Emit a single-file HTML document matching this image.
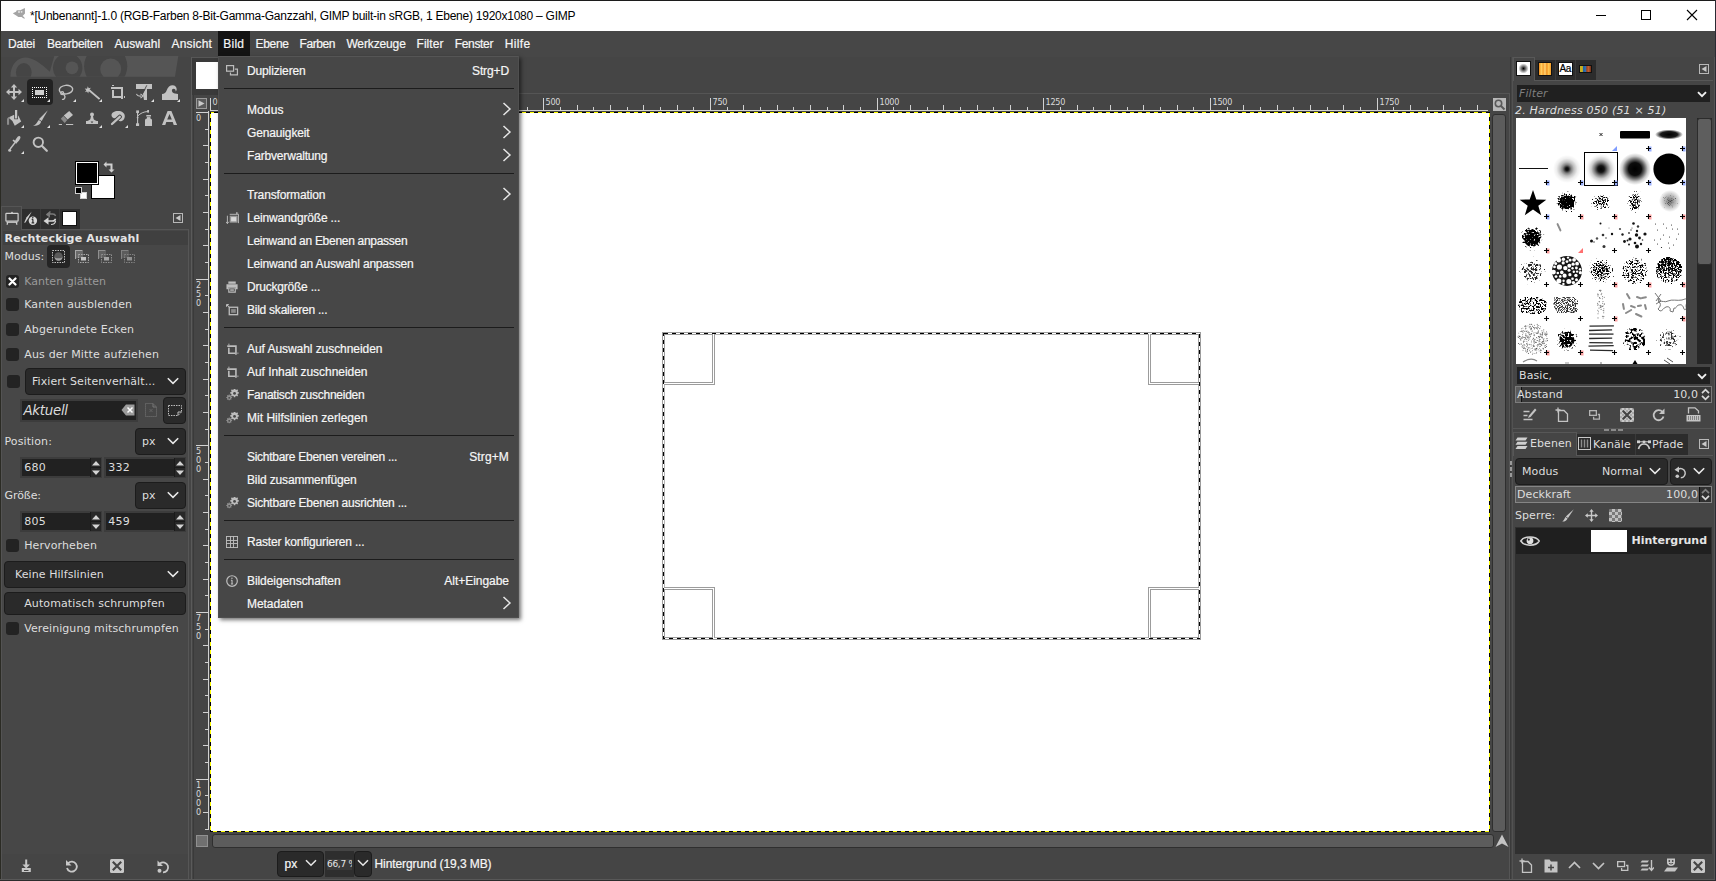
<!DOCTYPE html><html lang="de"><head><meta charset="utf-8"><title>GIMP</title><style>
html,body{margin:0;padding:0;}
body{width:1716px;height:881px;overflow:hidden;position:relative;background:#454545;font-family:"DejaVu Sans","Liberation Sans",sans-serif;font-size:11px;color:#dedede;}
div,span,svg{position:absolute;box-sizing:border-box;}
span{white-space:nowrap;}
.dv{font-family:"DejaVu Sans","Liberation Sans",sans-serif;font-size:11px;line-height:13px;color:#dedede;letter-spacing:0.08px;}
.dvb{font-family:"DejaVu Sans","Liberation Sans",sans-serif;font-size:11px;line-height:13px;color:#e4e4e4;font-weight:bold;letter-spacing:0.2px;}
.dvi{font-family:"DejaVu Sans","Liberation Sans",sans-serif;font-size:11px;line-height:13px;color:#dedede;font-style:italic;letter-spacing:0.1px;}
.ls{font-family:"Liberation Sans","DejaVu Sans",sans-serif;font-size:12px;line-height:14px;color:#f6f6f6;-webkit-text-stroke:0.2px #f6f6f6;}
.tt{font-family:"Liberation Sans","DejaVu Sans",sans-serif;font-size:12px;line-height:14px;color:#000;}
.r6{font-family:"DejaVu Sans","Liberation Sans",sans-serif;font-size:9px;line-height:10px;color:#d8d8d8;}
.cb{background:#232323;border-radius:3px;}
.btn{background:#2a2a2a;border:1px solid #1c1c1c;border-radius:4px;}
.entry{background:#252525;border:1px solid #3a3a3a;}
</style></head><body>
<div style="left:0px;top:0px;width:1716px;height:31px;background:#ffffff;"></div>
<div style="left:0px;top:0px;width:1716px;height:1px;background:#1c1c1c;"></div>
<div style="left:0px;top:0px;width:1px;height:31px;background:#1c1c1c;"></div>
<svg style="left:12px;top:7px;width:14px;height:13px" viewBox="12 7 14 13"><path d="M12.800 13.300L16 11.800L16.800 10.200L20.200 10.300L24.900 8.100L25 13.600L22.600 15.900L24 17L25 18.700L23.300 18.200L21.600 16.900L18.400 16.900L15.800 15.200L14.600 14.600z" fill="#a4a4a4"/><circle cx="19" cy="12" r="0.900" fill="#e8e8e8"/><circle cx="21.600" cy="11.800" r="0.900" fill="#e8e8e8"/></svg>
<span class="tt" style="left:30px;top:9px;letter-spacing:-0.244px;">*[Unbenannt]-1.0 (RGB-Farben 8-Bit-Gamma-Ganzzahl, GIMP built-in sRGB, 1 Ebene) 1920x1080 – GIMP</span>
<svg style="left:1580px;top:0;width:136px;height:31px" viewBox="0 0 136 31"><g stroke="#000" stroke-width="1" fill="none" shape-rendering="crispEdges"><path d="M16 15.5h10"/><rect x="61.5" y="10.5" width="9" height="9"/></g><path d="M107 10l10 10M117 10l-10 10" stroke="#000" stroke-width="1.1" fill="none"/></svg>
<div style="left:0px;top:31px;width:1716px;height:26px;background:#474747;"></div>
<div style="left:218px;top:31px;width:32px;height:25px;background:#141414;"></div>
<span class="ls" style="left:7.9px;top:37px;letter-spacing:-0.163px;">Datei</span>
<span class="ls" style="left:47.1px;top:37px;letter-spacing:-0.245px;">Bearbeiten</span>
<span class="ls" style="left:114.5px;top:37px;letter-spacing:0.034px;">Auswahl</span>
<span class="ls" style="left:171.5px;top:37px;letter-spacing:0.178px;">Ansicht</span>
<span class="ls" style="left:223.3px;top:37px;letter-spacing:0.247px;">Bild</span>
<span class="ls" style="left:255.5px;top:37px;letter-spacing:-0.320px;">Ebene</span>
<span class="ls" style="left:299.5px;top:37px;letter-spacing:-0.404px;">Farben</span>
<span class="ls" style="left:346.4px;top:37px;letter-spacing:-0.131px;">Werkzeuge</span>
<span class="ls" style="left:416.5px;top:37px;letter-spacing:0.055px;">Filter</span>
<span class="ls" style="left:454.7px;top:37px;letter-spacing:-0.326px;">Fenster</span>
<span class="ls" style="left:504.7px;top:37px;letter-spacing:0.359px;">Hilfe</span>
<div style="left:0px;top:31px;width:1px;height:850px;background:#2b2b24;"></div>
<svg style="left:0px;top:54px;width:190px;height:28px;" viewBox="0 0 190 28"><defs><clipPath id="wb"><path d="M10.400 22.700C10.400 10 18 3.400 25.500 3.400C33 3.400 42 10 49.800 17.700L54.300 2H178.300L175 22.700z"/></clipPath></defs><g clip-path="url(#wb)"><rect x="0" y="0" width="190" height="28" fill="#555555"/><ellipse cx="23.800" cy="18.300" rx="7.800" ry="9.400" fill="#454545"/><circle cx="67.700" cy="13.800" r="14.700" fill="#454545"/><circle cx="72" cy="13.800" r="6.400" fill="#555555"/><circle cx="105.700" cy="12.200" r="21.600" fill="#454545"/><circle cx="110.700" cy="15" r="10.500" fill="#555555"/></g></svg>
<div style="left:27px;top:79px;width:26px;height:26px;background:#222222;border-radius:4px;"></div>
<svg style="left:6px;top:84px;width:16px;height:16px;" viewBox="0 0 16 16"><path d="M8 0l3.200 3.500H9V7h3.500V4.800L16 8l-3.500 3.200V9H9v3.500h2.200L8 16l-3.200-3.500H7V9H3.500v2.200L0 8l3.500-3.200V7H7V3.500H4.800z" fill="#c2c2c2"/></svg>
<svg style="left:21px;top:99px;width:3px;height:3px;" viewBox="0 0 3 3"><path d="M3 0V3H0z" fill="#e0e0e0"/></svg>
<svg style="left:32px;top:84px;width:16px;height:16px;" viewBox="0 0 16 16"><g fill="#ffffff" shape-rendering="crispEdges"><rect x="0" y="3" width="1" height="1"/><rect x="0" y="13" width="1" height="1"/><rect x="2" y="3" width="1" height="1"/><rect x="2" y="13" width="1" height="1"/><rect x="4" y="3" width="1" height="1"/><rect x="4" y="13" width="1" height="1"/><rect x="6" y="3" width="1" height="1"/><rect x="6" y="13" width="1" height="1"/><rect x="8" y="3" width="1" height="1"/><rect x="8" y="13" width="1" height="1"/><rect x="10" y="3" width="1" height="1"/><rect x="10" y="13" width="1" height="1"/><rect x="12" y="3" width="1" height="1"/><rect x="12" y="13" width="1" height="1"/><rect x="14" y="3" width="1" height="1"/><rect x="14" y="13" width="1" height="1"/><rect x="0" y="5" width="1" height="1"/><rect x="14" y="5" width="1" height="1"/><rect x="0" y="7" width="1" height="1"/><rect x="14" y="7" width="1" height="1"/><rect x="0" y="9" width="1" height="1"/><rect x="14" y="9" width="1" height="1"/><rect x="0" y="11" width="1" height="1"/><rect x="14" y="11" width="1" height="1"/></g><rect x="3" y="6" width="9" height="5" fill="#cfcfcf"/></svg>
<svg style="left:47px;top:99px;width:3px;height:3px;" viewBox="0 0 3 3"><path d="M3 0V3H0z" fill="#e0e0e0"/></svg>
<svg style="left:58px;top:84px;width:16px;height:16px;" viewBox="0 0 16 16"><ellipse cx="8" cy="5.600" rx="6.700" ry="4.300" fill="none" stroke="#c2c2c2" stroke-width="1.400" transform="rotate(-6 8 5.600)"/><circle cx="4.200" cy="9.200" r="1.500" fill="none" stroke="#c2c2c2" stroke-width="1.200"/><path d="M5.200 10.200c1.800 1 2.400 3.400.8 4.800c-.7.600-1.500.600-2 .4" fill="none" stroke="#c2c2c2" stroke-width="1.400"/></svg>
<svg style="left:73px;top:99px;width:3px;height:3px;" viewBox="0 0 3 3"><path d="M3 0V3H0z" fill="#e0e0e0"/></svg>
<svg style="left:84px;top:84px;width:16px;height:16px;" viewBox="0 0 16 16"><path d="M5.500 6.500L15.500 15" stroke="#c2c2c2" stroke-width="1.700" fill="none"/><path d="M3.800 2.200l.9 2.100l2.200-.5l-1.300 1.800l1.500 1.700l-2.300 0l-.6 2.200l-1.100-2l-2.200.7l1.400-1.800l-1.500-1.800l2.300.1z" fill="#c2c2c2"/></svg>
<svg style="left:99px;top:99px;width:3px;height:3px;" viewBox="0 0 3 3"><path d="M3 0V3H0z" fill="#e0e0e0"/></svg>
<svg style="left:110px;top:84px;width:16px;height:16px;" viewBox="0 0 16 16"><path d="M1 3h12v12h-2V5H1z" fill="#c2c2c2"/><path d="M2 6h2v6h7v2H2z" fill="#c2c2c2"/><rect x="2" y="1" width="2" height="1" fill="#c2c2c2"/><rect x="14" y="12" width="1" height="2" fill="#c2c2c2"/></svg>
<svg style="left:136px;top:84px;width:16px;height:16px;" viewBox="0 0 16 16"><path d="M0 0H16V5H11V16H7.400L6.600 10.300L9.800 4.500L10.200 5H0z" fill="#c2c2c2"/><path d="M10.800 1.300L6.500 9.800L7.500 16" stroke="#454545" stroke-width="0.900" fill="none"/><path d="M0.500 9.800c.3 1.800 1.600 2.300 4.500 2.300" stroke="#c2c2c2" stroke-width="1.100" fill="none"/><path d="M4.500 9.800l2.600 2.200l-2.600 2.200" stroke="#c2c2c2" stroke-width="1.100" fill="none"/></svg>
<svg style="left:151px;top:99px;width:3px;height:3px;" viewBox="0 0 3 3"><path d="M3 0V3H0z" fill="#e0e0e0"/></svg>
<svg style="left:162px;top:84px;width:16px;height:16px;" viewBox="0 0 16 16"><path d="M0 16V10C2.500 10 3.800 9 4.600 6.600C5.800 3 8 1.300 10.500 1.300c2.700 0 4.200 1.900 4.200 3.900c0 1-.4 1.700-1 2.200c0-1.400-.5-2.600-2-2.600c-1.500 0-2 1.300-1.700 2.500c.4 1.400 1.600 2.100 3 2.300L16 10v6z" fill="#c2c2c2"/></svg>
<svg style="left:177px;top:99px;width:3px;height:3px;" viewBox="0 0 3 3"><path d="M3 0V3H0z" fill="#e0e0e0"/></svg>
<svg style="left:6px;top:110px;width:16px;height:16px;" viewBox="0 0 16 16"><path d="M9 0h2.200v8.500H9z" fill="#c2c2c2"/><path d="M2.300 7.500L8.200 4.800V9.200h3.800V5.500l.4.200L15.200 11.600L8.800 15.800L6.400 11z" fill="#c2c2c2"/><path d="M3.400 6.900C1.200 7.600 1 8.500 1 10v4.700h2.100V10c0-1 .3-1.500 1.100-2z" fill="#8c8c8c"/></svg>
<svg style="left:21px;top:125px;width:3px;height:3px;" viewBox="0 0 3 3"><path d="M3 0V3H0z" fill="#e0e0e0"/></svg>
<svg style="left:32px;top:110px;width:16px;height:16px;" viewBox="0 0 16 16"><path d="M15.800 0.200L9.700 11L6.900 9.200z" fill="#c2c2c2"/><path d="M6.700 9.900l2.200 1.400c.3 2.500-2.500 4.700-7.900 4.500c2.800-.9 3.700-3 5.700-5.900z" fill="#c2c2c2"/></svg>
<svg style="left:47px;top:125px;width:3px;height:3px;" viewBox="0 0 3 3"><path d="M3 0V3H0z" fill="#e0e0e0"/></svg>
<svg style="left:58px;top:110px;width:16px;height:16px;" viewBox="0 0 16 16"><path d="M11.200 1l3.800 4.100l-5.400 4.400L5.800 5.500z" fill="#c2c2c2"/><path d="M5.400 6.100l3.800 4l-2.500 2.800L2.800 8.800z" fill="#8a8a8a"/><path d="M0.800 14.500h3.200M8 14.500h7.200" stroke="#c2c2c2" stroke-width="1.100"/></svg>
<svg style="left:84px;top:110px;width:16px;height:16px;" viewBox="0 0 16 16"><circle cx="8" cy="4.500" r="2" fill="#c2c2c2"/><path d="M7 6h2l.5 2.500c.3 1.300 1.500 2.200 3.200 2.400H14v3.200H2v-3.200h1.300c1.700-.2 2.900-1.100 3.200-2.400z" fill="#c2c2c2"/><path d="M6.600 11.400h2.800L8 13.200z" fill="#454545"/></svg>
<svg style="left:99px;top:125px;width:3px;height:3px;" viewBox="0 0 3 3"><path d="M3 0V3H0z" fill="#e0e0e0"/></svg>
<svg style="left:110px;top:110px;width:16px;height:16px;" viewBox="0 0 16 16"><path d="M8 1c4 0 6.800 2 6.800 5.200c0 3-2.200 5-4.600 5c-1.500 0-2.300-.7-2-1.700c.3-1-.3-1.500-1.300-1.300c-3 .600-5.400-.7-5.400-3c0-2.500 2.800-4.200 6.500-4.200z" fill="#c2c2c2"/><path d="M9.800 6.800L2 14" stroke="#454545" stroke-width="4.200" stroke-linecap="round"/><path d="M9.800 6.800L2 14" stroke="#c2c2c2" stroke-width="2.300" stroke-linecap="round"/></svg>
<svg style="left:125px;top:125px;width:3px;height:3px;" viewBox="0 0 3 3"><path d="M3 0V3H0z" fill="#e0e0e0"/></svg>
<svg style="left:136px;top:110px;width:16px;height:16px;" viewBox="0 0 16 16"><path d="M1.600 1.500v13" fill="none" stroke="#c2c2c2" stroke-width="1.100"/><path d="M1.900 5.900C4.500 3.200 7.500 1.800 12 1.500" fill="none" stroke="#c2c2c2" stroke-width="1"/><rect x="0.200" y="0.400" width="2.800" height="2.600" fill="#c2c2c2"/><rect x="0" y="13.300" width="3.100" height="2.800" fill="#c2c2c2"/><circle cx="1.600" cy="7.600" r="0.900" fill="#c2c2c2"/><rect x="11.200" y="0" width="1.800" height="2.600" fill="#c2c2c2"/><path d="M10.300 5.100h4.700v1.600h-4.700zM10.900 6.700h3.500v1.900c1 .2 1.700.8 1.700 1.800v5.700H9V10.400c0-1 .8-1.600 1.900-1.800z" fill="#c2c2c2"/><path d="M10.300 6.700h4.700" stroke="#454545" stroke-width="0.500"/></svg>
<svg style="left:162px;top:110px;width:16px;height:16px;" viewBox="0 0 16 16"><path d="M5.600 1h3.800l5.700 14h-3.400l-1-2.900H4.300L3.300 15H0zM7.500 4.100L5.200 9.600h4.600z" fill="#c2c2c2"/></svg>
<svg style="left:6px;top:136px;width:16px;height:16px;" viewBox="0 0 16 16"><ellipse cx="11.700" cy="3.400" rx="3.800" ry="1.700" transform="rotate(-54 11.700 3.400)" fill="#c2c2c2"/><path d="M7 4.200l3.800 2.800" stroke="#c2c2c2" stroke-width="1.600"/><path d="M9.300 6.300L4.100 13" stroke="#c2c2c2" stroke-width="1.400"/><circle cx="3.700" cy="14.300" r="1.500" fill="#c2c2c2"/></svg>
<svg style="left:21px;top:151px;width:3px;height:3px;" viewBox="0 0 3 3"><path d="M3 0V3H0z" fill="#e0e0e0"/></svg>
<svg style="left:32px;top:136px;width:16px;height:16px;" viewBox="0 0 16 16"><circle cx="6.300" cy="6.300" r="4.700" fill="none" stroke="#c2c2c2" stroke-width="1.900"/><path d="M9.800 9.800l5 5" stroke="#c2c2c2" stroke-width="2.200" stroke-linecap="round"/></svg>
<div style="left:91px;top:175px;width:24px;height:24px;background:#ffffff;border:1px solid #000;"></div>
<div style="left:75px;top:161px;width:24px;height:24px;background:#000000;border:1px solid #000;box-shadow:inset 0 0 0 1px #fff;"></div>
<div style="left:80px;top:192px;width:7px;height:7px;background:#ffffff;border:1px solid #d0d0d0;"></div>
<div style="left:75px;top:187px;width:7px;height:7px;background:#000000;border:1px solid #d0d0d0;"></div>
<svg style="left:103px;top:161px;width:12px;height:12px;" viewBox="0 0 12 12"><path d="M0.500 3.500L3.500 0.500V2.500H9.500V8.500H11.500L8.500 11.500L5.500 8.500H7.500V4.500H3.500V6.500z" fill="#d0d0d0"/></svg>
<div style="left:22px;top:209px;width:58px;height:20px;background:#2e2e2e;"></div>
<div style="left:40px;top:209px;width:1px;height:20px;background:#3a3a3a;"></div>
<div style="left:59px;top:209px;width:1px;height:20px;background:#3a3a3a;"></div>
<div style="left:1px;top:206px;width:21px;height:24px;background:#454545;border:1px solid #555;border-bottom:none;"></div>
<div style="left:22px;top:229px;width:167px;height:1px;background:#555555;"></div>
<svg style="left:5px;top:211px;width:14px;height:14px;" viewBox="0 0 14 14"><rect x="0.900" y="2.400" width="12.200" height="7.800" rx="0.500" fill="#404040" stroke="#cfcfcf" stroke-width="1.200"/><path d="M5.800 2L7 0.600L8.200 2z" fill="#cfcfcf"/><path d="M1.500 11.300h11" stroke="#cfcfcf" stroke-width="1.100"/><path d="M2.800 11.300l-.8 2.500M11.200 11.300l.8 2.500" stroke="#cfcfcf" stroke-width="1.200"/></svg>
<svg style="left:24px;top:211px;width:15px;height:15px;" viewBox="0 0 15 15"><path d="M7.800 0.500L4.200 7.200L1 12L0.300 11.600L2.600 6.200z" fill="#d0d0d0"/><circle cx="8.900" cy="9.700" r="4.200" fill="#d8d8d8"/><path d="M8.900 8.300v3.600M7.700 8.400h1.200M7.600 11.900h2.600" stroke="#2e2e2e" stroke-width="1.200" fill="none"/><circle cx="8.800" cy="6.700" r="0.800" fill="#2e2e2e"/></svg>
<svg style="left:43px;top:211px;width:14px;height:15px;" viewBox="0 0 14 15"><path d="M3.500 3.800L6.800 1v2h3c1.500 0 2.500.8 2.800 2" fill="none" stroke="#7a7a7a" stroke-width="1.300"/><path d="M3 3.800L7 0.800V6.800z" fill="#7a7a7a"/><path d="M0.500 10L5.500 6.300V13.700z" fill="#d4d4d4"/><path d="M5 10h4.300c2 0 3-1 3-2.300" fill="none" stroke="#d4d4d4" stroke-width="1.700"/><path d="M8 13.500c2.500 0 4.300-1.200 4.500-3.500" fill="none" stroke="#d4d4d4" stroke-width="1.200"/></svg>
<div style="left:62px;top:211px;width:15px;height:15px;background:#ffffff;border:1px solid #111;"></div>
<svg style="left:173px;top:213px;width:10px;height:10px;" viewBox="0 0 10 10"><rect x="0.500" y="0.500" width="9" height="9" fill="none" stroke="#b8b8b8"/><path d="M7.500 2v6L2.500 5z" fill="#c8c8c8"/></svg>
<div style="left:2px;top:230px;width:186px;height:624px;background:#474747;"></div>
<div style="left:3px;top:231px;width:185px;height:14px;background:#404040;"></div>
<span class="dvb" style="left:4.5px;top:232px;letter-spacing:0.166px;">Rechteckige Auswahl</span>
<span class="dv" style="left:4.5px;top:250px;letter-spacing:-0.002px;">Modus:</span>
<div style="left:47px;top:245px;width:23px;height:23px;background:#242424;border-radius:4px;"></div>
<svg style="left:52px;top:250px;width:13px;height:13px;" viewBox="0 0 13 13"><rect x="0.500" y="0.500" width="12" height="12" fill="none" stroke="#bdbdbd" stroke-dasharray="1.500 1"/><circle cx="6.500" cy="6.500" r="4.200" fill="#5a5a5a"/><path d="M2.300 6.500a4.200 4.200 0 0 0 8.400 0a4.200 1.800 0 0 1-8.400 0z" fill="#a0a0a0"/></svg>
<svg style="left:75px;top:250px;width:14px;height:13px;" viewBox="0 0 14 13"><g opacity="1"><path d="M0.500 9V0.500H7.500" fill="none" stroke="#a8a8a8" stroke-width="1.200"/><rect x="1" y="1" width="7" height="7" fill="#6a6a6a"/><rect x="3.500" y="4.500" width="10" height="8" fill="none" stroke="#a8a8a8" stroke-dasharray="1.500 1"/><rect x="6" y="7" width="5" height="3.500" fill="#c4c4c4"/></g></svg>
<svg style="left:98px;top:250px;width:14px;height:13px;" viewBox="0 0 14 13"><g opacity="0.75"><path d="M0.500 9V0.500H7.500" fill="none" stroke="#a8a8a8" stroke-width="1.200"/><rect x="1" y="1" width="7" height="7" fill="#6a6a6a"/><rect x="3.500" y="4.500" width="10" height="8" fill="none" stroke="#a8a8a8" stroke-dasharray="1.500 1"/><rect x="6" y="7" width="5" height="3.500" fill="#c4c4c4"/></g></svg>
<svg style="left:121px;top:250px;width:14px;height:13px;" viewBox="0 0 14 13"><g opacity="0.6"><path d="M0.500 9V0.500H7.500" fill="none" stroke="#a8a8a8" stroke-width="1.200"/><rect x="1" y="1" width="7" height="7" fill="#6a6a6a"/><rect x="3.500" y="4.500" width="10" height="8" fill="none" stroke="#a8a8a8" stroke-dasharray="1.500 1"/><rect x="6" y="7" width="5" height="3.500" fill="#c4c4c4"/></g></svg>
<div class="cb" style="left:6px;top:275px;width:13px;height:13px;"></div>
<svg style="left:8px;top:277px;width:9px;height:9px;" viewBox="0 0 9 9"><path d="M1.500 1.500l6 6M7.500 1.500l-6 6" stroke="#ffffff" stroke-width="2.200" stroke-linecap="round"/></svg>
<span class="dv" style="left:24.2px;top:275px;letter-spacing:0.034px;color:#9a9a9a;">Kanten glätten</span>
<div class="cb" style="left:6px;top:298px;width:13px;height:13px;"></div>
<span class="dv" style="left:24.2px;top:298px;letter-spacing:0.098px;">Kanten ausblenden</span>
<div class="cb" style="left:6px;top:323px;width:13px;height:13px;"></div>
<span class="dv" style="left:24.2px;top:323px;letter-spacing:0.131px;">Abgerundete Ecken</span>
<div class="cb" style="left:6px;top:348px;width:13px;height:13px;"></div>
<span class="dv" style="left:24.2px;top:348px;letter-spacing:0.181px;">Aus der Mitte aufziehen</span>
<div class="cb" style="left:7px;top:375px;width:13px;height:13px;"></div>
<div class="btn" style="left:25px;top:368px;width:161px;height:27px;"></div>
<span class="dv" style="left:32px;top:375px;letter-spacing:0.088px;">Fixiert Seitenverhält...</span>
<svg style="left:167px;top:377px;width:12px;height:8px;" viewBox="0 0 12 8"><path d="M0.800 1.200l5.200 5.200l5.200-5.200" fill="none" stroke="#e8e8e8" stroke-width="1.600"/></svg>
<div style="left:20px;top:399px;width:118px;height:23px;background:#212121;border:2px solid #3c3c3c;"></div>
<span class="dvi" style="left:23.5px;top:402.5px;font-size:13.4px;line-height:16px;color:#dcdcdc;letter-spacing:-0.3px;">Aktuell</span>
<svg style="left:121px;top:404px;width:14px;height:12px;" viewBox="0 0 14 12"><path d="M0.500 6L5 0.500H13.500V11.500H5z" fill="#9c9c9c"/><path d="M6.500 3.500l5 5M11.500 3.500l-5 5" stroke="#ffffff" stroke-width="1.500"/></svg>
<svg style="left:145px;top:403px;width:12px;height:14px;" viewBox="0 0 12 14"><path d="M0.500 0.500H8L11.500 4V13.500H0.500z" fill="none" stroke="#787878" stroke-width="1" stroke-dasharray="1 1"/><path d="M8 0.500V4H11.500" fill="none" stroke="#787878"/><path d="M4.500 6l3 3m0-3l-3 3" stroke="#6a6a6a" stroke-width="0.800"/></svg>
<div class="btn" style="left:163px;top:397px;width:23px;height:27px;"></div>
<svg style="left:168px;top:405px;width:14px;height:11px;" viewBox="0 0 14 11"><path d="M0.500 0.500H13.500V7L10 10.500H0.500z" fill="none" stroke="#bdbdbd" stroke-dasharray="1.500 1"/><path d="M13.500 7H10V10.500" fill="none" stroke="#bdbdbd"/></svg>
<span class="dv" style="left:4.5px;top:435px;letter-spacing:0.107px;">Position:</span>
<div class="btn" style="left:135px;top:428px;width:51px;height:27px;"></div>
<span class="dv" style="left:142px;top:435px;">px</span>
<svg style="left:167px;top:437px;width:12px;height:8px;" viewBox="0 0 12 8"><path d="M0.800 1.200l5.200 5.200l5.200-5.200" fill="none" stroke="#e8e8e8" stroke-width="1.600"/></svg>
<div style="left:20px;top:457px;width:82px;height:21px;background:#3c3c3c;"></div>
<div style="left:22px;top:459px;width:68px;height:17px;background:#212121;"></div>
<div style="left:90px;top:458px;width:11px;height:19px;background:#1a1a1a;"></div>
<div style="left:91px;top:458px;width:10px;height:9px;background:#282828;"></div>
<div style="left:91px;top:468px;width:10px;height:9px;background:#282828;"></div>
<span class="dv" style="left:24.3px;top:461px;letter-spacing:0.25px;">680</span>
<svg style="left:91px;top:458px;width:10px;height:19px;" viewBox="0 0 10 19"><path d="M1 7.500l4-4.500l4 4.500z" fill="#d4d4d4"/><path d="M1 12.500l4 4.500l4-4.500z" fill="#d4d4d4"/></svg>
<div style="left:104px;top:457px;width:82px;height:21px;background:#3c3c3c;"></div>
<div style="left:106px;top:459px;width:68px;height:17px;background:#212121;"></div>
<div style="left:174px;top:458px;width:11px;height:19px;background:#1a1a1a;"></div>
<div style="left:175px;top:458px;width:10px;height:9px;background:#282828;"></div>
<div style="left:175px;top:468px;width:10px;height:9px;background:#282828;"></div>
<span class="dv" style="left:108.3px;top:461px;letter-spacing:0.25px;">332</span>
<svg style="left:175px;top:458px;width:10px;height:19px;" viewBox="0 0 10 19"><path d="M1 7.500l4-4.500l4 4.500z" fill="#d4d4d4"/><path d="M1 12.500l4 4.500l4-4.500z" fill="#d4d4d4"/></svg>
<span class="dv" style="left:4.5px;top:489px;letter-spacing:-0.073px;">Größe:</span>
<div class="btn" style="left:135px;top:482px;width:51px;height:27px;"></div>
<span class="dv" style="left:142px;top:489px;">px</span>
<svg style="left:167px;top:491px;width:12px;height:8px;" viewBox="0 0 12 8"><path d="M0.800 1.200l5.200 5.200l5.200-5.200" fill="none" stroke="#e8e8e8" stroke-width="1.600"/></svg>
<div style="left:20px;top:511px;width:82px;height:21px;background:#3c3c3c;"></div>
<div style="left:22px;top:513px;width:68px;height:17px;background:#212121;"></div>
<div style="left:90px;top:512px;width:11px;height:19px;background:#1a1a1a;"></div>
<div style="left:91px;top:512px;width:10px;height:9px;background:#282828;"></div>
<div style="left:91px;top:522px;width:10px;height:9px;background:#282828;"></div>
<span class="dv" style="left:24.3px;top:515px;letter-spacing:0.25px;">805</span>
<svg style="left:91px;top:512px;width:10px;height:19px;" viewBox="0 0 10 19"><path d="M1 7.500l4-4.500l4 4.500z" fill="#d4d4d4"/><path d="M1 12.500l4 4.500l4-4.500z" fill="#d4d4d4"/></svg>
<div style="left:104px;top:511px;width:82px;height:21px;background:#3c3c3c;"></div>
<div style="left:106px;top:513px;width:68px;height:17px;background:#212121;"></div>
<div style="left:174px;top:512px;width:11px;height:19px;background:#1a1a1a;"></div>
<div style="left:175px;top:512px;width:10px;height:9px;background:#282828;"></div>
<div style="left:175px;top:522px;width:10px;height:9px;background:#282828;"></div>
<span class="dv" style="left:108.3px;top:515px;letter-spacing:0.25px;">459</span>
<svg style="left:175px;top:512px;width:10px;height:19px;" viewBox="0 0 10 19"><path d="M1 7.500l4-4.500l4 4.500z" fill="#d4d4d4"/><path d="M1 12.500l4 4.500l4-4.500z" fill="#d4d4d4"/></svg>
<div class="cb" style="left:6px;top:539px;width:13px;height:13px;"></div>
<span class="dv" style="left:24.2px;top:539px;letter-spacing:0.119px;">Hervorheben</span>
<div class="btn" style="left:4px;top:561px;width:182px;height:27px;"></div>
<span class="dv" style="left:15px;top:568px;letter-spacing:0.071px;">Keine Hilfslinien</span>
<svg style="left:167px;top:570px;width:12px;height:8px;" viewBox="0 0 12 8"><path d="M0.800 1.200l5.200 5.200l5.200-5.200" fill="none" stroke="#e8e8e8" stroke-width="1.600"/></svg>
<div class="btn" style="left:4px;top:592px;width:182px;height:23px;"></div>
<span class="dv" style="left:24.2px;top:597px;letter-spacing:0.115px;">Automatisch schrumpfen</span>
<div class="cb" style="left:6px;top:622px;width:13px;height:13px;"></div>
<span class="dv" style="left:24.2px;top:622px;letter-spacing:0.079px;">Vereinigung mitschrumpfen</span>
<svg style="left:21px;top:859px;width:12px;height:14px;" viewBox="0 0 12 14"><path d="M4.200 0.500h2v5h2.800L5.200 9.500L1.400 5.500H4.200z" fill="#c8c8c8"/><path d="M0.800 9h9v4H0.800z" fill="#c8c8c8"/><path d="M3 11.500h4.500" stroke="#454545" stroke-width="1"/></svg>
<svg style="left:65px;top:859px;width:14px;height:15px;" viewBox="0 0 14 15"><path d="M3.200 4.200A5 5 0 1 1 2 9" fill="none" stroke="#c8c8c8" stroke-width="1.800"/><path d="M1 1v5.500H6.500z" fill="#c8c8c8"/></svg>
<div style="left:110px;top:859px;width:14px;height:14px;background:#c8c8c8;border-radius:1.500px;"></div>
<svg style="left:110px;top:859px;width:14px;height:14px;" viewBox="0 0 14 14"><path d="M2.800 2.800l8.400 8.400M11.200 2.800l-8.400 8.400" stroke="#454545" stroke-width="2.200"/></svg>
<svg style="left:156px;top:859px;width:14px;height:15px;" viewBox="0 0 14 15"><path d="M4 4.500A5 5 0 1 1 7 13.400" fill="none" stroke="#c8c8c8" stroke-width="1.800"/><path d="M1.500 1.500v5.500H7z" fill="#c8c8c8"/><circle cx="3.500" cy="11.800" r="2" fill="#c8c8c8"/></svg>
<div style="left:1px;top:206px;width:1px;height:673px;background:#535353;"></div>
<div style="left:188px;top:230px;width:1px;height:649px;background:#565656;"></div>
<div style="left:191px;top:57px;width:1px;height:822px;background:#5a5a5a;"></div>
<div style="left:192px;top:57px;width:1318px;height:37px;background:#454545;"></div>
<div style="left:192px;top:57px;width:31px;height:38px;background:#3a3a3a;border-top:1px solid #565656;"></div>
<div style="left:196px;top:62px;width:26px;height:27px;background:#ffffff;"></div>
<div style="left:223px;top:93px;width:1287px;height:1px;background:#555555;"></div>
<div style="left:1509px;top:93px;width:1px;height:786px;background:#555555;"></div>
<div style="left:193px;top:94px;width:1px;height:785px;background:#3a3a3a;"></div>
<svg style="left:196px;top:98px;width:11px;height:11px;" viewBox="0 0 11 11"><rect x="0.5" y="0.5" width="10" height="10" fill="#5a5a5a" stroke="#9a9a9a"/><path d="M2.5 2.2l6 3.300l-6 3.300z" fill="#c8c8c8"/></svg>
<svg style="left:0;top:0;width:1716px;height:881px" viewBox="0 0 1716 881"><style>.rt{font-family:"DejaVu Sans Condensed","DejaVu Sans","Liberation Sans",sans-serif;font-size:9px;fill:#dadada;letter-spacing:-0.25px;}</style><g shape-rendering="crispEdges" stroke="#d2d2d2" stroke-width="1"><path d="M209.5 110.5H1488"/><path d="M210.5 98V110"/><path d="M227.5 107V110"/><path d="M243.5 105V110"/><path d="M260.5 107V110"/><path d="M277.5 105V110"/><path d="M293.5 107V110"/><path d="M310.5 105V110"/><path d="M327.5 107V110"/><path d="M343.5 105V110"/><path d="M360.5 107V110"/><path d="M377.5 98V110"/><path d="M393.5 107V110"/><path d="M410.5 105V110"/><path d="M427.5 107V110"/><path d="M443.5 105V110"/><path d="M460.5 107V110"/><path d="M477.5 105V110"/><path d="M493.5 107V110"/><path d="M510.5 105V110"/><path d="M527.5 107V110"/><path d="M543.5 98V110"/><path d="M560.5 107V110"/><path d="M577.5 105V110"/><path d="M593.5 107V110"/><path d="M610.5 105V110"/><path d="M627.5 107V110"/><path d="M643.5 105V110"/><path d="M660.5 107V110"/><path d="M677.5 105V110"/><path d="M693.5 107V110"/><path d="M710.5 98V110"/><path d="M727.5 107V110"/><path d="M743.5 105V110"/><path d="M760.5 107V110"/><path d="M777.5 105V110"/><path d="M793.5 107V110"/><path d="M810.5 105V110"/><path d="M827.5 107V110"/><path d="M843.5 105V110"/><path d="M860.5 107V110"/><path d="M877.5 98V110"/><path d="M893.5 107V110"/><path d="M910.5 105V110"/><path d="M927.5 107V110"/><path d="M943.5 105V110"/><path d="M960.5 107V110"/><path d="M977.5 105V110"/><path d="M993.5 107V110"/><path d="M1010.5 105V110"/><path d="M1027.5 107V110"/><path d="M1043.5 98V110"/><path d="M1060.5 107V110"/><path d="M1077.5 105V110"/><path d="M1093.5 107V110"/><path d="M1110.5 105V110"/><path d="M1127.5 107V110"/><path d="M1143.5 105V110"/><path d="M1160.5 107V110"/><path d="M1177.5 105V110"/><path d="M1193.5 107V110"/><path d="M1210.5 98V110"/><path d="M1227.5 107V110"/><path d="M1243.5 105V110"/><path d="M1260.5 107V110"/><path d="M1277.5 105V110"/><path d="M1293.5 107V110"/><path d="M1310.5 105V110"/><path d="M1327.5 107V110"/><path d="M1343.5 105V110"/><path d="M1360.5 107V110"/><path d="M1377.5 98V110"/><path d="M1393.5 107V110"/><path d="M1410.5 105V110"/><path d="M1427.5 107V110"/><path d="M1443.5 105V110"/><path d="M1460.5 107V110"/><path d="M1477.5 105V110"/></g><text x="212.5" y="105" class="rt">0</text><text x="379.5" y="105" class="rt">250</text><text x="545.5" y="105" class="rt">500</text><text x="712.5" y="105" class="rt">750</text><text x="879.5" y="105" class="rt">1000</text><text x="1045.5" y="105" class="rt">1250</text><text x="1212.5" y="105" class="rt">1500</text><text x="1379.5" y="105" class="rt">1750</text><g shape-rendering="crispEdges" stroke="#d2d2d2" stroke-width="1"><path d="M208.5 111V830"/><path d="M196 112.5H208"/><path d="M205 129.5H208"/><path d="M203 145.5H208"/><path d="M205 162.5H208"/><path d="M203 179.5H208"/><path d="M205 195.5H208"/><path d="M203 212.5H208"/><path d="M205 229.5H208"/><path d="M203 245.5H208"/><path d="M205 262.5H208"/><path d="M196 279.5H208"/><path d="M205 295.5H208"/><path d="M203 312.5H208"/><path d="M205 329.5H208"/><path d="M203 345.5H208"/><path d="M205 362.5H208"/><path d="M203 379.5H208"/><path d="M205 395.5H208"/><path d="M203 412.5H208"/><path d="M205 429.5H208"/><path d="M196 445.5H208"/><path d="M205 462.5H208"/><path d="M203 479.5H208"/><path d="M205 495.5H208"/><path d="M203 512.5H208"/><path d="M205 529.5H208"/><path d="M203 545.5H208"/><path d="M205 562.5H208"/><path d="M203 579.5H208"/><path d="M205 595.5H208"/><path d="M196 612.5H208"/><path d="M205 629.5H208"/><path d="M203 645.5H208"/><path d="M205 662.5H208"/><path d="M203 679.5H208"/><path d="M205 695.5H208"/><path d="M203 712.5H208"/><path d="M205 729.5H208"/><path d="M203 745.5H208"/><path d="M205 762.5H208"/><path d="M196 779.5H208"/><path d="M205 795.5H208"/><path d="M203 812.5H208"/><path d="M205 829.5H208"/></g><text x="196" y="120.5" class="rt">0</text><text x="196" y="287.5" class="rt">2</text><text x="196" y="296.7" class="rt">5</text><text x="196" y="305.9" class="rt">0</text><text x="196" y="453.5" class="rt">5</text><text x="196" y="462.7" class="rt">0</text><text x="196" y="471.9" class="rt">0</text><text x="196" y="620.5" class="rt">7</text><text x="196" y="629.7" class="rt">5</text><text x="196" y="638.9" class="rt">0</text><text x="196" y="787.5" class="rt">1</text><text x="196" y="796.7" class="rt">0</text><text x="196" y="805.9" class="rt">0</text><text x="196" y="815.1" class="rt">0</text></svg>
<div style="left:210px;top:112px;width:1280px;height:720px;background:#ffffff;"></div>
<svg style="left:0;top:0;width:1716px;height:881px" viewBox="0 0 1716 881"><g fill="none" stroke-width="1" shape-rendering="crispEdges"><rect x="210.5" y="112.5" width="1279" height="719" stroke="#000"/><rect x="210.5" y="112.5" width="1279" height="719" stroke="#ffff00" stroke-dasharray="4 4" stroke-dashoffset="1"/><rect x="662.5" y="332.5" width="538" height="307" stroke="#9c9c9c"/><rect x="664.5" y="334.5" width="534" height="303" stroke="#b4b4b4"/><rect x="662.5" y="332.5" width="52" height="52" stroke="#9c9c9c"/><rect x="664.5" y="334.5" width="48" height="48" stroke="#9c9c9c"/><rect x="663.5" y="333.5" width="50" height="50" stroke="#fff"/><rect x="1148.5" y="332.5" width="52" height="52" stroke="#9c9c9c"/><rect x="1150.5" y="334.5" width="48" height="48" stroke="#9c9c9c"/><rect x="1149.5" y="333.5" width="50" height="50" stroke="#fff"/><rect x="662.5" y="587.5" width="52" height="52" stroke="#9c9c9c"/><rect x="664.5" y="589.5" width="48" height="48" stroke="#9c9c9c"/><rect x="663.5" y="588.5" width="50" height="50" stroke="#fff"/><rect x="1148.5" y="587.5" width="52" height="52" stroke="#9c9c9c"/><rect x="1150.5" y="589.5" width="48" height="48" stroke="#9c9c9c"/><rect x="1149.5" y="588.5" width="50" height="50" stroke="#fff"/><rect x="663.5" y="333.5" width="536" height="305" stroke="#fff"/><rect x="663.5" y="333.5" width="536" height="305" stroke="#000" stroke-dasharray="4 4"/></g></svg>
<svg style="left:1493px;top:98px;width:13px;height:13px;" viewBox="0 0 13 13"><rect x="0" y="0" width="13" height="13" fill="#b8b8b8"/><circle cx="5.5" cy="5.5" r="3.2" fill="none" stroke="#5a5a5a" stroke-width="1.6"/><path d="M8 8l3.5 3.5" stroke="#5a5a5a" stroke-width="2"/></svg>
<div style="left:1492px;top:114px;width:14px;height:718px;background:#5c5c5c;border:1px solid #2f2f2f;border-radius:3px;"></div>
<div style="left:212px;top:834px;width:1282px;height:14px;background:#5c5c5c;border:1px solid #2f2f2f;border-radius:3px;"></div>
<svg style="left:196px;top:835px;width:12px;height:12px;" viewBox="0 0 12 12"><rect x="0" y="0" width="12" height="12" fill="#707070"/><rect x="0.5" y="0.5" width="11" height="11" fill="none" stroke="#b0b0b0" stroke-dasharray="1 1"/></svg>
<svg style="left:1495px;top:834px;width:14px;height:14px;" viewBox="0 0 14 14"><path d="M7 0.5L13.5 13L7 9.5L0.5 13z" fill="#c4c4c4"/></svg>
<div class="btn" style="left:277px;top:851px;width:47px;height:26px;"></div>
<span class="ls" style="left:284.5px;top:857px;">px</span>
<svg style="left:305px;top:859px;width:12px;height:8px;" viewBox="0 0 12 8"><path d="M1 1.2l5 5l5-5" fill="none" stroke="#e6e6e6" stroke-width="1.6"/></svg>
<div style="left:325px;top:851px;width:29px;height:26px;background:#2e2e2e;"></div>
<div style="left:327px;top:859px;width:25px;height:11px;background:#3a3a3a;"></div>
<span class="dv" style="left:327px;top:858px;font-size:9px;letter-spacing:-0.3px;width:25px;overflow:hidden;color:#e8e8e8;">66,7 %</span>
<div class="btn" style="left:354px;top:851px;width:18px;height:26px;"></div>
<svg style="left:357px;top:859px;width:12px;height:8px;" viewBox="0 0 12 8"><path d="M1 1.2l5 5l5-5" fill="none" stroke="#e6e6e6" stroke-width="1.6"/></svg>
<span class="ls" style="left:374.5px;top:857px;letter-spacing:-0.082px;">Hintergrund (19,3 MB)</span>
<div style="left:0px;top:879px;width:1716px;height:1px;background:#585858;"></div>
<div style="left:0px;top:880px;width:1716px;height:1px;background:#2c2c2c;"></div>
<div style="left:1510px;top:57px;width:1px;height:822px;background:#3a3a3a;"></div>
<div style="left:1512px;top:57px;width:1px;height:822px;background:#525252;"></div>
<div style="left:1714px;top:57px;width:1px;height:822px;background:#555555;"></div>
<div style="left:1715px;top:0px;width:1px;height:881px;background:#2a2a33;"></div>
<div style="left:1535px;top:60px;width:61px;height:20px;background:#2c2c2c;"></div>
<div style="left:1555px;top:60px;width:1px;height:20px;background:#3a3a3a;"></div>
<div style="left:1575px;top:60px;width:1px;height:20px;background:#3a3a3a;"></div>
<div style="left:1513px;top:57px;width:22px;height:24px;background:#454545;border:1px solid #575757;border-bottom:none;"></div>
<div style="left:1535px;top:80px;width:178px;height:1px;background:#575757;"></div>
<div style="left:1516px;top:61px;width:15px;height:15px;background:#ffffff;border:1px solid #111;background:radial-gradient(circle at 50% 50%,#000 0,#555 18%,#fff 55%);"></div>
<div style="left:1538px;top:62px;width:14px;height:14px;border:1px solid #111;background:linear-gradient(90deg,#f08a18 0,#ffd060 20%,#f7a030 35%,#ffd878 50%,#f09020 65%,#ffc850 80%,#f39a28 100%);"></div>
<div style="left:1558px;top:62px;width:15px;height:14px;background:#ffffff;border:1px solid #111;"></div>
<span class="ls" style="left:1559.5px;top:62px;font-size:10px;line-height:13px;color:#000;letter-spacing:-0.4px;-webkit-text-stroke:0.2px #000;">Aa</span>
<div style="left:1579px;top:65px;width:13px;height:8px;border:1px solid #111;background:linear-gradient(90deg,#c8b020 0,#c8b020 22%,#2060a0 30%,#3070b0 50%,#a04020 62%,#c06030 78%,#703018 100%);"></div>
<svg style="left:1699px;top:64px;width:10px;height:10px;" viewBox="0 0 10 10"><rect x="0.500" y="0.500" width="9" height="9" fill="none" stroke="#b8b8b8"/><path d="M7.500 2v6L2.500 5z" fill="#c8c8c8"/></svg>
<div style="left:1517px;top:85px;width:193px;height:17px;background:#202020;"></div>
<span class="dvi" style="left:1519px;top:87px;color:#7e7e7e;">Filter</span>
<svg style="left:1696.5px;top:91px;width:10px;height:7px;" viewBox="0 0 10 7"><path d="M1 1.200l4 4l4-4" fill="none" stroke="#f0f0f0" stroke-width="1.900"/></svg>
<span class="dvi" style="left:1515px;top:104px;letter-spacing:0.200px;">2. Hardness 050 (51 × 51)</span>
<div style="left:1516px;top:118px;width:170px;height:246px;background:#ffffff;"></div>
<svg style="left:0;top:0;width:1716px;height:881px" viewBox="0 0 1716 881"><defs>
<radialGradient id="g1"><stop offset="0" stop-color="#000" stop-opacity="1"/><stop offset="0.12" stop-color="#000" stop-opacity="0.9"/><stop offset="0.3" stop-color="#000" stop-opacity="0.5"/><stop offset="0.5" stop-color="#000" stop-opacity="0.25"/><stop offset="0.75" stop-color="#000" stop-opacity="0.07"/><stop offset="1" stop-color="#000" stop-opacity="0"/></radialGradient>
<radialGradient id="g2"><stop offset="0" stop-color="#000" stop-opacity="1"/><stop offset="0.22" stop-color="#000" stop-opacity="0.92"/><stop offset="0.45" stop-color="#000" stop-opacity="0.5"/><stop offset="0.65" stop-color="#000" stop-opacity="0.2"/><stop offset="0.85" stop-color="#000" stop-opacity="0.05"/><stop offset="1" stop-color="#000" stop-opacity="0"/></radialGradient>
<radialGradient id="g3"><stop offset="0" stop-color="#000" stop-opacity="1"/><stop offset="0.4" stop-color="#000" stop-opacity="0.95"/><stop offset="0.6" stop-color="#000" stop-opacity="0.6"/><stop offset="0.8" stop-color="#000" stop-opacity="0.2"/><stop offset="1" stop-color="#000" stop-opacity="0"/></radialGradient>
<radialGradient id="g4"><stop offset="0" stop-color="#000" stop-opacity="1"/><stop offset="0.6" stop-color="#000" stop-opacity="0.9"/><stop offset="1" stop-color="#000" stop-opacity="0"/></radialGradient>
<radialGradient id="gs"><stop offset="0" stop-color="#000" stop-opacity="1"/><stop offset="1" stop-color="#000" stop-opacity="0"/></radialGradient>
<radialGradient id="gc"><stop offset="0" stop-color="#000" stop-opacity="1"/><stop offset="0.45" stop-color="#000" stop-opacity="0.9"/><stop offset="1" stop-color="#000" stop-opacity="0"/></radialGradient>
<radialGradient id="gf"><stop offset="0" stop-color="#000" stop-opacity="1"/><stop offset="0.8" stop-color="#000" stop-opacity="0.9"/><stop offset="1" stop-color="#000" stop-opacity="0.2"/></radialGradient>
<linearGradient id="gv" x1="0" y1="0" x2="0" y2="1"><stop offset="0" stop-color="#000" stop-opacity="1"/><stop offset="0.45" stop-color="#000" stop-opacity="0.9"/><stop offset="1" stop-color="#000" stop-opacity="0.6"/></linearGradient>
<clipPath id="gridclip"><rect x="1516" y="118" width="170" height="246"/></clipPath><filter id="sp1" x="-10%" y="-10%" width="120%" height="120%" color-interpolation-filters="sRGB"><feTurbulence type="fractalNoise" baseFrequency="0.55" numOctaves="2" seed="3" result="t"/><feColorMatrix in="t" type="matrix" values="0 0 0 0 0  0 0 0 0 0  0 0 0 0 0  1 0 0 0 0" result="n"/><feComposite in="SourceGraphic" in2="n" operator="arithmetic" k1="0" k2="4.5" k3="6" k4="-5.22" result="c"/><feComponentTransfer in="c"><feFuncA type="linear" slope="1" intercept="0"/></feComponentTransfer></filter><filter id="sp2" x="-10%" y="-10%" width="120%" height="120%" color-interpolation-filters="sRGB"><feTurbulence type="fractalNoise" baseFrequency="0.8" numOctaves="2" seed="11" result="t"/><feColorMatrix in="t" type="matrix" values="0 0 0 0 0  0 0 0 0 0  0 0 0 0 0  1 0 0 0 0" result="n"/><feComposite in="SourceGraphic" in2="n" operator="arithmetic" k1="0" k2="3.5" k3="7" k4="-6.3" result="c"/><feComponentTransfer in="c"><feFuncA type="linear" slope="1" intercept="0"/></feComponentTransfer></filter><filter id="sp3" x="-10%" y="-10%" width="120%" height="120%" color-interpolation-filters="sRGB"><feTurbulence type="fractalNoise" baseFrequency="0.8" numOctaves="2" seed="5" result="t"/><feColorMatrix in="t" type="matrix" values="0 0 0 0 0  0 0 0 0 0  0 0 0 0 0  1 0 0 0 0" result="n"/><feComposite in="SourceGraphic" in2="n" operator="arithmetic" k1="0" k2="3.5" k3="7" k4="-6.3" result="c"/><feComponentTransfer in="c"><feFuncA type="linear" slope="1" intercept="0"/></feComponentTransfer></filter><filter id="sp4" x="-10%" y="-10%" width="120%" height="120%" color-interpolation-filters="sRGB"><feTurbulence type="fractalNoise" baseFrequency="0.9" numOctaves="2" seed="9" result="t"/><feColorMatrix in="t" type="matrix" values="0 0 0 0 0  0 0 0 0 0  0 0 0 0 0  1 0 0 0 0" result="n"/><feComposite in="SourceGraphic" in2="n" operator="arithmetic" k1="0" k2="2.25" k3="5" k4="-4.35" result="c"/><feComponentTransfer in="c"><feFuncA type="linear" slope="1" intercept="0"/></feComponentTransfer></filter><filter id="sp5" x="-10%" y="-10%" width="120%" height="120%" color-interpolation-filters="sRGB"><feTurbulence type="fractalNoise" baseFrequency="0.5" numOctaves="2" seed="21" result="t"/><feColorMatrix in="t" type="matrix" values="0 0 0 0 0  0 0 0 0 0  0 0 0 0 0  1 0 0 0 0" result="n"/><feComposite in="SourceGraphic" in2="n" operator="arithmetic" k1="0" k2="4.2" k3="6" k4="-5.4" result="c"/><feComponentTransfer in="c"><feFuncA type="linear" slope="1" intercept="0"/></feComponentTransfer></filter><filter id="sp6" x="-10%" y="-10%" width="120%" height="120%" color-interpolation-filters="sRGB"><feTurbulence type="fractalNoise" baseFrequency="0.45" numOctaves="2" seed="31" result="t"/><feColorMatrix in="t" type="matrix" values="0 0 0 0 0  0 0 0 0 0  0 0 0 0 0  1 0 0 0 0" result="n"/><feComposite in="SourceGraphic" in2="n" operator="arithmetic" k1="0" k2="4.05" k3="9" k4="-8.01" result="c"/><feComponentTransfer in="c"><feFuncA type="linear" slope="1" intercept="0"/></feComponentTransfer></filter><filter id="sp7" x="-10%" y="-10%" width="120%" height="120%" color-interpolation-filters="sRGB"><feTurbulence type="fractalNoise" baseFrequency="0.8" numOctaves="2" seed="13" result="t"/><feColorMatrix in="t" type="matrix" values="0 0 0 0 0  0 0 0 0 0  0 0 0 0 0  1 0 0 0 0" result="n"/><feComposite in="SourceGraphic" in2="n" operator="arithmetic" k1="0" k2="3.5" k3="7" k4="-6.16" result="c"/><feComponentTransfer in="c"><feFuncA type="linear" slope="1" intercept="0"/></feComponentTransfer></filter><filter id="sp8" x="-10%" y="-10%" width="120%" height="120%" color-interpolation-filters="sRGB"><feTurbulence type="fractalNoise" baseFrequency="0.6" numOctaves="2" seed="17" result="t"/><feColorMatrix in="t" type="matrix" values="0 0 0 0 0  0 0 0 0 0  0 0 0 0 0  1 0 0 0 0" result="n"/><feComposite in="SourceGraphic" in2="n" operator="arithmetic" k1="0" k2="4.05" k3="9" k4="-8.28" result="c"/><feComponentTransfer in="c"><feFuncA type="linear" slope="1" intercept="0"/></feComponentTransfer></filter><filter id="sp9" x="-10%" y="-10%" width="120%" height="120%" color-interpolation-filters="sRGB"><feTurbulence type="fractalNoise" baseFrequency="0.6" numOctaves="2" seed="19" result="t"/><feColorMatrix in="t" type="matrix" values="0 0 0 0 0  0 0 0 0 0  0 0 0 0 0  1 0 0 0 0" result="n"/><feComposite in="SourceGraphic" in2="n" operator="arithmetic" k1="0" k2="4.4" k3="8" k4="-7.04" result="c"/><feComponentTransfer in="c"><feFuncA type="linear" slope="1" intercept="0"/></feComponentTransfer></filter><filter id="sp10" x="-10%" y="-10%" width="120%" height="120%" color-interpolation-filters="sRGB"><feTurbulence type="fractalNoise" baseFrequency="0.6" numOctaves="2" seed="23" result="t"/><feColorMatrix in="t" type="matrix" values="0 0 0 0 0  0 0 0 0 0  0 0 0 0 0  1 0 0 0 0" result="n"/><feComposite in="SourceGraphic" in2="n" operator="arithmetic" k1="0" k2="4.05" k3="9" k4="-8.28" result="c"/><feComponentTransfer in="c"><feFuncA type="linear" slope="1" intercept="0"/></feComponentTransfer></filter><filter id="sp11" x="-10%" y="-10%" width="120%" height="120%" color-interpolation-filters="sRGB"><feTurbulence type="fractalNoise" baseFrequency="0.8" numOctaves="2" seed="27" result="t"/><feColorMatrix in="t" type="matrix" values="0 0 0 0 0  0 0 0 0 0  0 0 0 0 0  1 0 0 0 0" result="n"/><feComposite in="SourceGraphic" in2="n" operator="arithmetic" k1="0" k2="3.15" k3="7" k4="-6.23" result="c"/><feComponentTransfer in="c"><feFuncA type="linear" slope="1" intercept="0"/></feComponentTransfer></filter><filter id="sp12" x="-10%" y="-10%" width="120%" height="120%" color-interpolation-filters="sRGB"><feTurbulence type="fractalNoise" baseFrequency="0.5" numOctaves="2" seed="37" result="t"/><feColorMatrix in="t" type="matrix" values="0 0 0 0 0  0 0 0 0 0  0 0 0 0 0  1 0 0 0 0" result="n"/><feComposite in="SourceGraphic" in2="n" operator="arithmetic" k1="0" k2="3.9" k3="6" k4="-5.4" result="c"/><feComponentTransfer in="c"><feFuncA type="linear" slope="1" intercept="0"/></feComponentTransfer></filter><filter id="sp13" x="-10%" y="-10%" width="120%" height="120%" color-interpolation-filters="sRGB"><feTurbulence type="fractalNoise" baseFrequency="0.35" numOctaves="2" seed="41" result="t"/><feColorMatrix in="t" type="matrix" values="0 0 0 0 0  0 0 0 0 0  0 0 0 0 0  1 0 0 0 0" result="n"/><feComposite in="SourceGraphic" in2="n" operator="arithmetic" k1="0" k2="3.5" k3="7" k4="-6.44" result="c"/><feComponentTransfer in="c"><feFuncA type="linear" slope="1" intercept="0"/></feComponentTransfer></filter><filter id="sp14" x="-10%" y="-10%" width="120%" height="120%" color-interpolation-filters="sRGB"><feTurbulence type="fractalNoise" baseFrequency="0.45" numOctaves="2" seed="43" result="t"/><feColorMatrix in="t" type="matrix" values="0 0 0 0 0  0 0 0 0 0  0 0 0 0 0  1 0 0 0 0" result="n"/><feComposite in="SourceGraphic" in2="n" operator="arithmetic" k1="0" k2="2.88" k3="6" k4="-5.52" result="c"/><feComponentTransfer in="c"><feFuncA type="linear" slope="1" intercept="0"/></feComponentTransfer></filter></defs><g clip-path="url(#gridclip)"><path d="M1599.5 133l3 3m0-3l-3 3" stroke="#222" stroke-width="1"/><rect x="1620" y="131" width="30" height="7.500" rx="1" fill="#000"/><ellipse cx="1669" cy="134.5" rx="14" ry="5" fill="url(#g4)"/><rect x="1519" y="168" width="29" height="1" fill="#111"/><circle cx="1567" cy="169" r="14" fill="url(#g1)"/><circle cx="1601" cy="169" r="15" fill="url(#g2)"/><rect x="1584.500" y="152.500" width="33" height="33" fill="none" stroke="#000" stroke-width="1" shape-rendering="crispEdges"/><circle cx="1635" cy="169" r="16" fill="url(#g3)"/><circle cx="1669" cy="169" r="15.600" fill="#000"/><polygon points="1533.0,190.0 1536.3,199.5 1546.3,199.7 1538.3,205.7 1541.2,215.3 1533.0,209.6 1524.8,215.3 1527.7,205.7 1519.7,199.7 1529.7,199.5" fill="#000"/><g filter="url(#sp1)" opacity="1"><ellipse cx="1567" cy="202" rx="13" ry="12" fill="url(#gc)"/></g><g filter="url(#sp2)" opacity="1"><ellipse cx="1601" cy="202" rx="14" ry="11" fill="url(#gc)"/></g><g filter="url(#sp3)" opacity="1"><ellipse cx="1635" cy="202" rx="10" ry="15" fill="url(#gc)"/></g><ellipse cx="1670" cy="201" rx="11" ry="11" fill="url(#gs)" opacity="0.55"/><g filter="url(#sp4)" opacity="0.5"><ellipse cx="1670" cy="201" rx="12" ry="12" fill="url(#gs)"/></g><g filter="url(#sp5)" opacity="1"><ellipse cx="1532" cy="238" rx="15" ry="15" fill="url(#gc)"/></g><path d="M1557.5 224l3 6.500" stroke="#8c8c8c" stroke-width="1.800" stroke-linecap="round"/><circle cx="1600.5" cy="223.5" r="1" fill="#111" opacity="1"/><circle cx="1612" cy="234" r="1.2" fill="#111" opacity="1"/><circle cx="1603" cy="235" r="1.3" fill="#111" opacity="0.85"/><circle cx="1597" cy="238.5" r="1.2" fill="#111" opacity="0.75"/><circle cx="1591.5" cy="241" r="1.5" fill="#111" opacity="1"/><circle cx="1606" cy="238" r="0.8" fill="#111" opacity="0.75"/><circle cx="1604" cy="246.5" r="1.5" fill="#111" opacity="0.85"/><circle cx="1609" cy="228" r="0.5" fill="#111" opacity="0.65"/><circle cx="1594" cy="242" r="0.8" fill="#111" opacity="0.75"/><circle cx="1633.5" cy="223.5" r="1.3" fill="#111" opacity="1"/><circle cx="1638" cy="226.5" r="1.2" fill="#111" opacity="0.85"/><circle cx="1620" cy="229" r="1.1" fill="#111" opacity="0.75"/><circle cx="1631" cy="230" r="0.7" fill="#111" opacity="0.85"/><circle cx="1637" cy="231" r="1.2" fill="#111" opacity="0.95"/><circle cx="1645" cy="234" r="1.6" fill="#111" opacity="1"/><circle cx="1622.5" cy="234.5" r="1.2" fill="#111" opacity="0.95"/><circle cx="1636.5" cy="235" r="1.7" fill="#111" opacity="1"/><circle cx="1629" cy="233" r="0.9" fill="#111" opacity="0.85"/><circle cx="1639.5" cy="238" r="1.4" fill="#111" opacity="1"/><circle cx="1630" cy="239" r="1.6" fill="#111" opacity="1"/><circle cx="1627.5" cy="240.5" r="1" fill="#111" opacity="1"/><circle cx="1624.5" cy="241.5" r="1.4" fill="#111" opacity="1"/><circle cx="1642.5" cy="240" r="0.8" fill="#111" opacity="0.85"/><circle cx="1635" cy="243" r="1.3" fill="#111" opacity="1"/><circle cx="1641" cy="244" r="1.2" fill="#111" opacity="0.95"/><circle cx="1629" cy="244.5" r="1" fill="#111" opacity="0.95"/><circle cx="1637" cy="246.5" r="2" fill="#111" opacity="1"/><circle cx="1632" cy="228" r="0.6" fill="#111" opacity="0.75"/><circle cx="1655.5" cy="224" r="0.5" fill="#111" opacity="1"/><circle cx="1663.5" cy="224" r="0.5" fill="#111" opacity="1"/><circle cx="1671.5" cy="225" r="0.5" fill="#111" opacity="1"/><circle cx="1666.5" cy="228" r="0.5" fill="#111" opacity="1"/><circle cx="1672.5" cy="229" r="0.5" fill="#111" opacity="1"/><circle cx="1677.5" cy="229" r="0.5" fill="#111" opacity="1"/><circle cx="1657.5" cy="230" r="0.5" fill="#111" opacity="1"/><circle cx="1678.5" cy="234" r="0.5" fill="#111" opacity="1"/><circle cx="1663.5" cy="235" r="0.5" fill="#111" opacity="1"/><circle cx="1669.5" cy="237" r="0.5" fill="#111" opacity="1"/><circle cx="1660.5" cy="239" r="0.5" fill="#111" opacity="1"/><circle cx="1676.5" cy="239" r="0.5" fill="#111" opacity="1"/><circle cx="1654.5" cy="240" r="0.5" fill="#111" opacity="1"/><circle cx="1668.5" cy="243" r="0.5" fill="#111" opacity="1"/><circle cx="1657.5" cy="244" r="0.5" fill="#111" opacity="1"/><circle cx="1673.5" cy="245" r="0.5" fill="#111" opacity="1"/><circle cx="1661.5" cy="247.5" r="0.6" fill="#111" opacity="1"/><circle cx="1669.5" cy="248" r="0.5" fill="#111" opacity="1"/><g filter="url(#sp6)" opacity="0.85"><ellipse cx="1532" cy="271" rx="17" ry="17" fill="url(#gc)"/></g><circle cx="1567" cy="271" r="15" fill="#151515"/><circle cx="1564.6" cy="275.7" r="2.1" fill="#fff"/><circle cx="1575.9" cy="275.4" r="1.7" fill="#fff"/><circle cx="1556.0" cy="276.6" r="1.4" fill="#fff"/><circle cx="1568.8" cy="281.6" r="2.5" fill="#fff"/><circle cx="1559.4" cy="267.0" r="2.6" fill="#fff"/><circle cx="1569.9" cy="274.7" r="1.6" fill="#fff"/><circle cx="1569.3" cy="265.7" r="2.0" fill="#fff"/><circle cx="1563.2" cy="262.9" r="1.6" fill="#fff"/><circle cx="1570.1" cy="260.1" r="1.5" fill="#fff"/><circle cx="1572.5" cy="278.8" r="1.3" fill="#fff"/><circle cx="1574.1" cy="259.8" r="1.9" fill="#fff"/><circle cx="1565.3" cy="268.1" r="2.2" fill="#fff"/><circle cx="1558.8" cy="260.2" r="2.4" fill="#fff"/><circle cx="1558.9" cy="280.9" r="2.5" fill="#fff"/><circle cx="1560.3" cy="276.4" r="1.3" fill="#fff"/><circle cx="1557.8" cy="273.0" r="1.3" fill="#fff"/><circle cx="1576.4" cy="268.0" r="1.4" fill="#fff"/><circle cx="1577.1" cy="263.7" r="1.9" fill="#fff"/><circle cx="1567.0" cy="261.6" r="1.4" fill="#fff"/><circle cx="1553.5" cy="272.1" r="2.4" fill="#fff"/><circle cx="1573.8" cy="271.8" r="1.2" fill="#fff"/><circle cx="1561.8" cy="272.4" r="1.8" fill="#fff"/><circle cx="1563.6" cy="280.7" r="1.2" fill="#fff"/><circle cx="1576.5" cy="279.7" r="1.5" fill="#fff"/><circle cx="1580.0" cy="269.2" r="1.2" fill="#fff"/><circle cx="1569.0" cy="270.3" r="1.5" fill="#fff"/><circle cx="1573.1" cy="264.2" r="1.6" fill="#fff"/><circle cx="1554.5" cy="266.9" r="1.4" fill="#fff"/><circle cx="1568.0" cy="257.6" r="1.2" fill="#fff"/><circle cx="1563.4" cy="259.2" r="1.7" fill="#fff"/><circle cx="1563.4" cy="284.0" r="1.2" fill="#fff"/><circle cx="1580.4" cy="272.7" r="1.6" fill="#fff"/><circle cx="1555.7" cy="263.6" r="1.5" fill="#fff"/><circle cx="1573.4" cy="282.6" r="1.7" fill="#fff"/><circle cx="1572.5" cy="268.2" r="1.2" fill="#fff"/><circle cx="1577.1" cy="271.6" r="1.2" fill="#fff"/><g filter="url(#sp7)" opacity="1"><ellipse cx="1601" cy="271" rx="17" ry="16" fill="url(#gc)"/></g><g filter="url(#sp8)" opacity="1"><ellipse cx="1635" cy="271" rx="15" ry="15" fill="url(#gf)"/></g><g filter="url(#sp9)" opacity="1"><circle cx="1669" cy="270.5" r="13.500" fill="url(#gv)"/></g><g filter="url(#sp10)" opacity="1"><rect x="1518" y="297" width="29" height="17" rx="8" fill="#000"/></g><g filter="url(#sp11)" opacity="0.8"><path d="M1554 297h22l3 6l-2 10h-20l-4-8z" fill="#000"/></g><circle cx="1602.2" cy="306.5" r="0.550" fill="#777"/><circle cx="1600.9" cy="290.4" r="0.550" fill="#777"/><circle cx="1598.0" cy="295.9" r="0.550" fill="#777"/><circle cx="1603.2" cy="310.5" r="0.550" fill="#777"/><circle cx="1601.2" cy="294.6" r="0.550" fill="#777"/><circle cx="1604.3" cy="297.2" r="0.550" fill="#777"/><circle cx="1603.0" cy="301.5" r="0.550" fill="#777"/><circle cx="1597.5" cy="303.3" r="0.550" fill="#777"/><circle cx="1601.2" cy="307.0" r="0.550" fill="#777"/><circle cx="1600.5" cy="291.1" r="0.550" fill="#777"/><circle cx="1603.9" cy="316.5" r="0.550" fill="#777"/><circle cx="1603.7" cy="312.7" r="0.550" fill="#777"/><circle cx="1602.6" cy="303.3" r="0.550" fill="#777"/><circle cx="1599.3" cy="301.8" r="0.550" fill="#777"/><circle cx="1598.0" cy="313.8" r="0.550" fill="#777"/><circle cx="1599.5" cy="297.6" r="0.550" fill="#777"/><circle cx="1601.1" cy="309.4" r="0.550" fill="#777"/><circle cx="1602.4" cy="316.2" r="0.550" fill="#777"/><circle cx="1602.5" cy="306.5" r="0.550" fill="#777"/><circle cx="1603.8" cy="308.8" r="0.550" fill="#777"/><circle cx="1604.3" cy="304.3" r="0.550" fill="#777"/><circle cx="1598.1" cy="304.3" r="0.550" fill="#777"/><circle cx="1603.8" cy="310.8" r="0.550" fill="#777"/><circle cx="1600.9" cy="306.2" r="0.550" fill="#777"/><circle cx="1598.0" cy="317.9" r="0.550" fill="#777"/><circle cx="1599.2" cy="301.6" r="0.550" fill="#777"/><circle cx="1599.4" cy="290.4" r="0.550" fill="#777"/><circle cx="1597.8" cy="305.3" r="0.550" fill="#777"/><circle cx="1600.4" cy="290.3" r="0.550" fill="#777"/><circle cx="1598.4" cy="311.7" r="0.550" fill="#777"/><circle cx="1597.8" cy="310.2" r="0.550" fill="#777"/><circle cx="1600.2" cy="305.8" r="0.550" fill="#777"/><circle cx="1602.4" cy="298.7" r="0.550" fill="#777"/><circle cx="1602.6" cy="296.6" r="0.550" fill="#777"/><circle cx="1600.9" cy="305.6" r="0.550" fill="#777"/><circle cx="1600.2" cy="305.2" r="0.550" fill="#777"/><circle cx="1603.0" cy="305.9" r="0.550" fill="#777"/><circle cx="1598.3" cy="294.2" r="0.550" fill="#777"/><circle cx="1600.4" cy="307.4" r="0.550" fill="#777"/><circle cx="1601.7" cy="293.3" r="0.550" fill="#777"/><circle cx="1603.1" cy="316.4" r="0.550" fill="#777"/><circle cx="1600.0" cy="298.4" r="0.550" fill="#777"/><circle cx="1599.0" cy="308.1" r="0.550" fill="#777"/><circle cx="1597.6" cy="294.1" r="0.550" fill="#777"/><circle cx="1604.3" cy="303.8" r="0.550" fill="#777"/><circle cx="1603.1" cy="318.0" r="0.550" fill="#777"/><path d="M1627 294l2.5 4.3" stroke="#8a8a8a" stroke-width="2" stroke-linecap="round"/><path d="M1637 297l3.8 1.4" stroke="#8a8a8a" stroke-width="2" stroke-linecap="round"/><path d="M1642 298l3.9 -0.7" stroke="#8a8a8a" stroke-width="2" stroke-linecap="round"/><path d="M1623 304l0.9 4.9" stroke="#8a8a8a" stroke-width="2" stroke-linecap="round"/><path d="M1631 306l3.8 1.4" stroke="#8a8a8a" stroke-width="2" stroke-linecap="round"/><path d="M1638 306l3.0 -0.5" stroke="#8a8a8a" stroke-width="2" stroke-linecap="round"/><path d="M1645 305l1.0 3.9" stroke="#8a8a8a" stroke-width="2" stroke-linecap="round"/><path d="M1626 313l5.2 -3.0" stroke="#8a8a8a" stroke-width="2" stroke-linecap="round"/><path d="M1636 314l5.4 2.5" stroke="#8a8a8a" stroke-width="2" stroke-linecap="round"/><path d="M1655 293l6 8l-5 3M1661 294l-5 7M1659 302c3-2 6 1 9-1c4-2 9 0 14-1c3-1 5-2 6 0c0 3-2 3-2 6c1 3-1 5-2 3c-1-3-2-5-5-4c-3 0-2 4-5 3l-1 4l-3-1c1-3-1-5-4-4c-3 1-3 4-6 4l-2-2c2-2 3-4 2-6c-2-1-2-3-1-5z" fill="none" stroke="#777" stroke-width="1"/><circle cx="1522.0" cy="346.8" r="0.450" fill="#3a3a3a"/><circle cx="1542.5" cy="343.3" r="0.450" fill="#3a3a3a"/><circle cx="1540.3" cy="326.8" r="0.450" fill="#3a3a3a"/><circle cx="1536.8" cy="327.8" r="0.450" fill="#3a3a3a"/><circle cx="1528.2" cy="331.6" r="0.450" fill="#3a3a3a"/><circle cx="1542.1" cy="332.1" r="0.450" fill="#3a3a3a"/><circle cx="1541.4" cy="345.3" r="0.450" fill="#3a3a3a"/><circle cx="1536.3" cy="342.5" r="0.450" fill="#3a3a3a"/><circle cx="1543.5" cy="340.8" r="0.450" fill="#3a3a3a"/><circle cx="1539.7" cy="343.4" r="0.450" fill="#3a3a3a"/><circle cx="1523.0" cy="350.2" r="0.450" fill="#3a3a3a"/><circle cx="1538.0" cy="338.1" r="0.450" fill="#3a3a3a"/><circle cx="1538.6" cy="330.6" r="0.450" fill="#3a3a3a"/><circle cx="1531.6" cy="328.7" r="0.450" fill="#3a3a3a"/><circle cx="1531.9" cy="348.4" r="0.450" fill="#3a3a3a"/><circle cx="1522.8" cy="330.9" r="0.450" fill="#3a3a3a"/><circle cx="1537.9" cy="332.9" r="0.450" fill="#3a3a3a"/><circle cx="1547.4" cy="334.1" r="0.450" fill="#3a3a3a"/><circle cx="1543.2" cy="339.1" r="0.450" fill="#3a3a3a"/><circle cx="1537.2" cy="348.1" r="0.450" fill="#3a3a3a"/><circle cx="1545.4" cy="347.3" r="0.450" fill="#3a3a3a"/><circle cx="1539.5" cy="337.8" r="0.450" fill="#3a3a3a"/><circle cx="1540.2" cy="346.3" r="0.450" fill="#3a3a3a"/><circle cx="1532.6" cy="331.0" r="0.450" fill="#3a3a3a"/><circle cx="1525.9" cy="327.9" r="0.450" fill="#3a3a3a"/><circle cx="1536.3" cy="348.5" r="0.450" fill="#3a3a3a"/><circle cx="1538.3" cy="336.8" r="0.450" fill="#3a3a3a"/><circle cx="1523.4" cy="342.8" r="0.450" fill="#3a3a3a"/><circle cx="1546.6" cy="346.4" r="0.450" fill="#3a3a3a"/><circle cx="1532.5" cy="350.7" r="0.450" fill="#3a3a3a"/><circle cx="1533.2" cy="338.9" r="0.450" fill="#3a3a3a"/><circle cx="1534.1" cy="327.7" r="0.450" fill="#3a3a3a"/><circle cx="1545.6" cy="335.4" r="0.450" fill="#3a3a3a"/><circle cx="1534.3" cy="341.1" r="0.450" fill="#3a3a3a"/><circle cx="1538.6" cy="331.9" r="0.450" fill="#3a3a3a"/><circle cx="1526.8" cy="336.4" r="0.450" fill="#3a3a3a"/><circle cx="1524.9" cy="331.6" r="0.450" fill="#3a3a3a"/><circle cx="1540.1" cy="336.2" r="0.450" fill="#3a3a3a"/><circle cx="1539.0" cy="336.3" r="0.450" fill="#3a3a3a"/><circle cx="1536.6" cy="332.9" r="0.450" fill="#3a3a3a"/><circle cx="1545.2" cy="334.3" r="0.450" fill="#3a3a3a"/><circle cx="1536.7" cy="352.2" r="0.450" fill="#3a3a3a"/><circle cx="1545.1" cy="333.7" r="0.450" fill="#3a3a3a"/><circle cx="1526.9" cy="341.3" r="0.450" fill="#3a3a3a"/><circle cx="1535.6" cy="349.7" r="0.450" fill="#3a3a3a"/><circle cx="1529.1" cy="344.2" r="0.450" fill="#3a3a3a"/><circle cx="1531.6" cy="333.5" r="0.450" fill="#3a3a3a"/><circle cx="1543.3" cy="349.0" r="0.450" fill="#3a3a3a"/><circle cx="1539.0" cy="341.9" r="0.450" fill="#3a3a3a"/><circle cx="1530.5" cy="352.4" r="0.450" fill="#3a3a3a"/><circle cx="1525.7" cy="348.5" r="0.450" fill="#3a3a3a"/><circle cx="1527.5" cy="344.7" r="0.450" fill="#3a3a3a"/><circle cx="1534.7" cy="335.7" r="0.450" fill="#3a3a3a"/><circle cx="1531.5" cy="341.0" r="0.450" fill="#3a3a3a"/><circle cx="1529.2" cy="332.5" r="0.450" fill="#3a3a3a"/><circle cx="1544.2" cy="332.9" r="0.450" fill="#3a3a3a"/><circle cx="1534.2" cy="329.0" r="0.450" fill="#3a3a3a"/><circle cx="1522.6" cy="334.7" r="0.450" fill="#3a3a3a"/><circle cx="1547.6" cy="340.2" r="0.450" fill="#3a3a3a"/><circle cx="1539.9" cy="346.4" r="0.450" fill="#3a3a3a"/><circle cx="1524.6" cy="331.1" r="0.450" fill="#3a3a3a"/><circle cx="1532.5" cy="348.0" r="0.450" fill="#3a3a3a"/><circle cx="1534.7" cy="328.6" r="0.450" fill="#3a3a3a"/><circle cx="1532.5" cy="326.2" r="0.450" fill="#3a3a3a"/><circle cx="1535.7" cy="327.7" r="0.450" fill="#3a3a3a"/><circle cx="1526.7" cy="326.1" r="0.450" fill="#3a3a3a"/><circle cx="1525.9" cy="333.4" r="0.450" fill="#3a3a3a"/><circle cx="1540.9" cy="335.0" r="0.450" fill="#3a3a3a"/><circle cx="1530.9" cy="334.0" r="0.450" fill="#3a3a3a"/><circle cx="1533.9" cy="335.2" r="0.450" fill="#3a3a3a"/><circle cx="1522.6" cy="336.6" r="0.450" fill="#3a3a3a"/><circle cx="1537.7" cy="326.4" r="0.450" fill="#3a3a3a"/><circle cx="1519.7" cy="344.3" r="0.450" fill="#3a3a3a"/><circle cx="1531.8" cy="331.1" r="0.450" fill="#3a3a3a"/><circle cx="1520.7" cy="336.6" r="0.450" fill="#3a3a3a"/><circle cx="1542.4" cy="333.4" r="0.450" fill="#3a3a3a"/><circle cx="1534.2" cy="353.6" r="0.450" fill="#3a3a3a"/><circle cx="1539.6" cy="337.6" r="0.450" fill="#3a3a3a"/><circle cx="1524.0" cy="348.4" r="0.450" fill="#3a3a3a"/><circle cx="1542.1" cy="335.9" r="0.450" fill="#3a3a3a"/><circle cx="1540.4" cy="344.0" r="0.450" fill="#3a3a3a"/><circle cx="1545.2" cy="345.6" r="0.450" fill="#3a3a3a"/><circle cx="1534.3" cy="346.0" r="0.450" fill="#3a3a3a"/><circle cx="1531.3" cy="329.6" r="0.450" fill="#3a3a3a"/><circle cx="1530.1" cy="334.8" r="0.450" fill="#3a3a3a"/><circle cx="1543.7" cy="339.6" r="0.450" fill="#3a3a3a"/><circle cx="1538.1" cy="331.7" r="0.450" fill="#3a3a3a"/><circle cx="1540.1" cy="333.7" r="0.450" fill="#3a3a3a"/><circle cx="1521.1" cy="343.8" r="0.450" fill="#3a3a3a"/><circle cx="1535.1" cy="350.6" r="0.450" fill="#3a3a3a"/><circle cx="1546.3" cy="338.8" r="0.450" fill="#3a3a3a"/><circle cx="1525.1" cy="326.1" r="0.450" fill="#3a3a3a"/><circle cx="1533.5" cy="327.5" r="0.450" fill="#3a3a3a"/><circle cx="1544.3" cy="343.1" r="0.450" fill="#3a3a3a"/><circle cx="1525.4" cy="326.4" r="0.450" fill="#3a3a3a"/><circle cx="1544.3" cy="346.9" r="0.450" fill="#3a3a3a"/><circle cx="1540.8" cy="350.2" r="0.450" fill="#3a3a3a"/><circle cx="1538.0" cy="332.3" r="0.450" fill="#3a3a3a"/><circle cx="1535.1" cy="339.2" r="0.450" fill="#3a3a3a"/><circle cx="1527.5" cy="337.8" r="0.450" fill="#3a3a3a"/><circle cx="1518.8" cy="333.1" r="0.450" fill="#3a3a3a"/><circle cx="1531.6" cy="324.3" r="0.450" fill="#3a3a3a"/><circle cx="1535.0" cy="332.8" r="0.450" fill="#3a3a3a"/><circle cx="1546.4" cy="346.5" r="0.450" fill="#3a3a3a"/><circle cx="1541.6" cy="337.0" r="0.450" fill="#3a3a3a"/><circle cx="1520.2" cy="331.6" r="0.450" fill="#3a3a3a"/><circle cx="1529.8" cy="347.6" r="0.450" fill="#3a3a3a"/><circle cx="1518.6" cy="337.6" r="0.450" fill="#3a3a3a"/><circle cx="1543.6" cy="343.7" r="0.450" fill="#3a3a3a"/><circle cx="1523.9" cy="337.4" r="0.450" fill="#3a3a3a"/><circle cx="1536.6" cy="348.3" r="0.450" fill="#3a3a3a"/><circle cx="1528.8" cy="336.4" r="0.450" fill="#3a3a3a"/><circle cx="1531.6" cy="328.7" r="0.450" fill="#3a3a3a"/><circle cx="1527.5" cy="345.3" r="0.450" fill="#3a3a3a"/><circle cx="1529.0" cy="333.8" r="0.450" fill="#3a3a3a"/><circle cx="1526.4" cy="331.5" r="0.450" fill="#3a3a3a"/><circle cx="1539.9" cy="341.5" r="0.450" fill="#3a3a3a"/><circle cx="1537.0" cy="340.5" r="0.450" fill="#3a3a3a"/><circle cx="1533.6" cy="344.9" r="0.450" fill="#3a3a3a"/><circle cx="1526.4" cy="335.6" r="0.450" fill="#3a3a3a"/><circle cx="1524.1" cy="348.6" r="0.450" fill="#3a3a3a"/><circle cx="1540.1" cy="339.5" r="0.450" fill="#3a3a3a"/><circle cx="1537.1" cy="345.2" r="0.450" fill="#3a3a3a"/><circle cx="1539.8" cy="344.4" r="0.450" fill="#3a3a3a"/><circle cx="1533.2" cy="338.0" r="0.450" fill="#3a3a3a"/><circle cx="1541.9" cy="345.1" r="0.450" fill="#3a3a3a"/><circle cx="1536.6" cy="348.8" r="0.450" fill="#3a3a3a"/><circle cx="1525.9" cy="339.1" r="0.450" fill="#3a3a3a"/><circle cx="1524.1" cy="347.9" r="0.450" fill="#3a3a3a"/><circle cx="1539.6" cy="339.2" r="0.450" fill="#3a3a3a"/><circle cx="1529.0" cy="337.6" r="0.450" fill="#3a3a3a"/><circle cx="1518.4" cy="343.5" r="0.450" fill="#3a3a3a"/><circle cx="1539.1" cy="344.0" r="0.450" fill="#3a3a3a"/><circle cx="1525.7" cy="335.3" r="0.450" fill="#3a3a3a"/><circle cx="1528.5" cy="338.1" r="0.450" fill="#3a3a3a"/><circle cx="1527.1" cy="330.9" r="0.450" fill="#3a3a3a"/><circle cx="1546.3" cy="334.2" r="0.450" fill="#3a3a3a"/><circle cx="1535.2" cy="342.6" r="0.450" fill="#3a3a3a"/><circle cx="1542.9" cy="348.3" r="0.450" fill="#3a3a3a"/><circle cx="1529.9" cy="344.7" r="0.450" fill="#3a3a3a"/><circle cx="1541.3" cy="342.2" r="0.450" fill="#3a3a3a"/><circle cx="1521.7" cy="328.8" r="0.450" fill="#3a3a3a"/><circle cx="1527.5" cy="351.6" r="0.450" fill="#3a3a3a"/><circle cx="1542.3" cy="337.5" r="0.450" fill="#3a3a3a"/><circle cx="1534.0" cy="341.1" r="0.450" fill="#3a3a3a"/><circle cx="1533.1" cy="345.7" r="0.450" fill="#3a3a3a"/><circle cx="1525.9" cy="334.6" r="0.450" fill="#3a3a3a"/><circle cx="1531.1" cy="327.8" r="0.450" fill="#3a3a3a"/><circle cx="1522.8" cy="332.0" r="0.450" fill="#3a3a3a"/><circle cx="1522.7" cy="345.7" r="0.450" fill="#3a3a3a"/><circle cx="1542.2" cy="343.0" r="0.450" fill="#3a3a3a"/><circle cx="1523.3" cy="341.7" r="0.450" fill="#3a3a3a"/><circle cx="1533.9" cy="327.2" r="0.450" fill="#3a3a3a"/><circle cx="1543.0" cy="342.6" r="0.450" fill="#3a3a3a"/><circle cx="1537.5" cy="325.0" r="0.450" fill="#3a3a3a"/><circle cx="1526.8" cy="352.4" r="0.450" fill="#3a3a3a"/><circle cx="1526.2" cy="351.1" r="0.450" fill="#3a3a3a"/><circle cx="1537.2" cy="333.4" r="0.450" fill="#3a3a3a"/><circle cx="1526.0" cy="331.0" r="0.450" fill="#3a3a3a"/><circle cx="1530.1" cy="324.3" r="0.450" fill="#3a3a3a"/><circle cx="1540.6" cy="352.3" r="0.450" fill="#3a3a3a"/><circle cx="1534.7" cy="339.3" r="0.450" fill="#3a3a3a"/><circle cx="1527.2" cy="337.3" r="0.450" fill="#3a3a3a"/><circle cx="1528.2" cy="348.6" r="0.450" fill="#3a3a3a"/><circle cx="1525.6" cy="337.4" r="0.450" fill="#3a3a3a"/><circle cx="1543.4" cy="348.8" r="0.450" fill="#3a3a3a"/><circle cx="1528.0" cy="325.9" r="0.450" fill="#3a3a3a"/><circle cx="1546.0" cy="332.9" r="0.450" fill="#3a3a3a"/><circle cx="1529.8" cy="339.0" r="0.450" fill="#3a3a3a"/><circle cx="1540.2" cy="334.2" r="0.450" fill="#3a3a3a"/><circle cx="1529.5" cy="334.7" r="0.450" fill="#3a3a3a"/><circle cx="1523.4" cy="346.9" r="0.450" fill="#3a3a3a"/><circle cx="1528.6" cy="340.3" r="0.450" fill="#3a3a3a"/><circle cx="1526.5" cy="346.4" r="0.450" fill="#3a3a3a"/><circle cx="1546.5" cy="334.2" r="0.450" fill="#3a3a3a"/><circle cx="1533.4" cy="338.5" r="0.450" fill="#3a3a3a"/><circle cx="1544.9" cy="334.5" r="0.450" fill="#3a3a3a"/><circle cx="1543.1" cy="341.4" r="0.450" fill="#3a3a3a"/><circle cx="1541.2" cy="334.2" r="0.450" fill="#3a3a3a"/><circle cx="1525.7" cy="335.9" r="0.450" fill="#3a3a3a"/><circle cx="1541.3" cy="337.6" r="0.450" fill="#3a3a3a"/><circle cx="1539.1" cy="350.9" r="0.450" fill="#3a3a3a"/><circle cx="1521.5" cy="331.0" r="0.450" fill="#3a3a3a"/><circle cx="1527.3" cy="332.6" r="0.450" fill="#3a3a3a"/><circle cx="1537.6" cy="329.0" r="0.450" fill="#3a3a3a"/><circle cx="1524.7" cy="337.5" r="0.450" fill="#3a3a3a"/><circle cx="1532.5" cy="339.6" r="0.450" fill="#3a3a3a"/><circle cx="1532.7" cy="326.1" r="0.450" fill="#3a3a3a"/><circle cx="1527.7" cy="343.1" r="0.450" fill="#3a3a3a"/><circle cx="1535.7" cy="342.6" r="0.450" fill="#3a3a3a"/><circle cx="1523.2" cy="332.9" r="0.450" fill="#3a3a3a"/><circle cx="1519.5" cy="336.7" r="0.450" fill="#3a3a3a"/><circle cx="1524.1" cy="344.5" r="0.450" fill="#3a3a3a"/><circle cx="1530.0" cy="348.9" r="0.450" fill="#3a3a3a"/><circle cx="1547.5" cy="340.7" r="0.450" fill="#3a3a3a"/><circle cx="1536.5" cy="328.2" r="0.450" fill="#3a3a3a"/><circle cx="1529.7" cy="324.3" r="0.450" fill="#3a3a3a"/><circle cx="1528.6" cy="353.3" r="0.450" fill="#3a3a3a"/><circle cx="1538.2" cy="349.6" r="0.450" fill="#3a3a3a"/><circle cx="1530.7" cy="336.1" r="0.450" fill="#3a3a3a"/><circle cx="1534.2" cy="334.5" r="0.450" fill="#3a3a3a"/><circle cx="1537.5" cy="344.7" r="0.450" fill="#3a3a3a"/><circle cx="1524.7" cy="326.4" r="0.450" fill="#3a3a3a"/><circle cx="1530.6" cy="336.8" r="0.450" fill="#3a3a3a"/><circle cx="1521.1" cy="344.3" r="0.450" fill="#3a3a3a"/><circle cx="1544.2" cy="343.2" r="0.450" fill="#3a3a3a"/><circle cx="1520.9" cy="340.3" r="0.450" fill="#3a3a3a"/><circle cx="1524.6" cy="347.1" r="0.450" fill="#3a3a3a"/><circle cx="1535.9" cy="342.0" r="0.450" fill="#3a3a3a"/><circle cx="1540.7" cy="344.3" r="0.450" fill="#3a3a3a"/><circle cx="1546.5" cy="331.6" r="0.450" fill="#3a3a3a"/><circle cx="1534.1" cy="346.6" r="0.450" fill="#3a3a3a"/><circle cx="1537.1" cy="324.3" r="0.450" fill="#3a3a3a"/><circle cx="1542.4" cy="334.5" r="0.450" fill="#3a3a3a"/><circle cx="1525.5" cy="351.1" r="0.450" fill="#3a3a3a"/><circle cx="1531.2" cy="345.9" r="0.450" fill="#3a3a3a"/><circle cx="1538.2" cy="344.3" r="0.450" fill="#3a3a3a"/><circle cx="1542.5" cy="341.8" r="0.450" fill="#3a3a3a"/><circle cx="1544.0" cy="338.8" r="0.450" fill="#3a3a3a"/><circle cx="1525.7" cy="350.0" r="0.450" fill="#3a3a3a"/><circle cx="1533.4" cy="345.9" r="0.450" fill="#3a3a3a"/><circle cx="1525.3" cy="325.7" r="0.450" fill="#3a3a3a"/><circle cx="1533.9" cy="341.1" r="0.450" fill="#3a3a3a"/><circle cx="1543.8" cy="329.8" r="0.450" fill="#3a3a3a"/><circle cx="1524.8" cy="341.2" r="0.450" fill="#3a3a3a"/><circle cx="1543.5" cy="341.2" r="0.450" fill="#3a3a3a"/><circle cx="1537.7" cy="346.4" r="0.450" fill="#3a3a3a"/><circle cx="1545.6" cy="347.5" r="0.450" fill="#3a3a3a"/><circle cx="1530.6" cy="326.2" r="0.450" fill="#3a3a3a"/><circle cx="1519.6" cy="336.5" r="0.450" fill="#3a3a3a"/><circle cx="1524.3" cy="339.8" r="0.450" fill="#3a3a3a"/><circle cx="1531.8" cy="324.2" r="0.450" fill="#3a3a3a"/><circle cx="1541.6" cy="344.4" r="0.450" fill="#3a3a3a"/><circle cx="1525.9" cy="328.2" r="0.450" fill="#3a3a3a"/><circle cx="1545.0" cy="340.9" r="0.450" fill="#3a3a3a"/><circle cx="1530.5" cy="329.8" r="0.450" fill="#3a3a3a"/><circle cx="1527.4" cy="351.0" r="0.450" fill="#3a3a3a"/><circle cx="1525.8" cy="338.6" r="0.450" fill="#3a3a3a"/><circle cx="1529.0" cy="337.2" r="0.450" fill="#3a3a3a"/><circle cx="1523.3" cy="348.4" r="0.450" fill="#3a3a3a"/><circle cx="1533.6" cy="346.2" r="0.450" fill="#3a3a3a"/><circle cx="1523.7" cy="337.1" r="0.450" fill="#3a3a3a"/><circle cx="1547.2" cy="338.5" r="0.450" fill="#3a3a3a"/><circle cx="1529.2" cy="327.2" r="0.450" fill="#3a3a3a"/><circle cx="1526.5" cy="343.8" r="0.450" fill="#3a3a3a"/><circle cx="1528.4" cy="332.7" r="0.450" fill="#3a3a3a"/><circle cx="1540.9" cy="350.6" r="0.450" fill="#3a3a3a"/><circle cx="1532.3" cy="354.2" r="0.450" fill="#3a3a3a"/><circle cx="1529.1" cy="334.9" r="0.450" fill="#3a3a3a"/><circle cx="1521.1" cy="331.6" r="0.450" fill="#3a3a3a"/><circle cx="1528.3" cy="353.4" r="0.450" fill="#3a3a3a"/><circle cx="1522.6" cy="338.1" r="0.450" fill="#3a3a3a"/><circle cx="1534.2" cy="343.2" r="0.450" fill="#3a3a3a"/><circle cx="1518.2" cy="337.5" r="0.450" fill="#3a3a3a"/><circle cx="1522.1" cy="337.7" r="0.450" fill="#3a3a3a"/><circle cx="1519.0" cy="335.7" r="0.450" fill="#3a3a3a"/><circle cx="1530.2" cy="328.5" r="0.450" fill="#3a3a3a"/><circle cx="1534.0" cy="342.2" r="0.450" fill="#3a3a3a"/><circle cx="1539.5" cy="328.8" r="0.450" fill="#3a3a3a"/><circle cx="1521.3" cy="338.8" r="0.450" fill="#3a3a3a"/><circle cx="1533.2" cy="333.0" r="0.450" fill="#3a3a3a"/><circle cx="1519.7" cy="338.6" r="0.450" fill="#3a3a3a"/><circle cx="1541.9" cy="330.8" r="0.450" fill="#3a3a3a"/><circle cx="1537.3" cy="328.0" r="0.450" fill="#3a3a3a"/><circle cx="1538.2" cy="327.5" r="0.450" fill="#3a3a3a"/><circle cx="1542.2" cy="338.0" r="0.450" fill="#3a3a3a"/><circle cx="1542.6" cy="334.9" r="0.450" fill="#3a3a3a"/><circle cx="1522.0" cy="331.2" r="0.450" fill="#3a3a3a"/><circle cx="1523.4" cy="341.0" r="0.450" fill="#3a3a3a"/><circle cx="1526.5" cy="343.9" r="0.450" fill="#3a3a3a"/><circle cx="1531.4" cy="334.0" r="0.450" fill="#3a3a3a"/><circle cx="1527.5" cy="336.0" r="0.450" fill="#3a3a3a"/><circle cx="1536.8" cy="350.0" r="0.450" fill="#3a3a3a"/><circle cx="1528.0" cy="339.1" r="0.450" fill="#3a3a3a"/><circle cx="1540.8" cy="349.6" r="0.450" fill="#3a3a3a"/><circle cx="1525.4" cy="328.9" r="0.450" fill="#3a3a3a"/><circle cx="1527.7" cy="349.3" r="0.450" fill="#3a3a3a"/><circle cx="1528.5" cy="347.4" r="0.450" fill="#3a3a3a"/><circle cx="1531.1" cy="344.3" r="0.450" fill="#3a3a3a"/><circle cx="1536.7" cy="337.6" r="0.450" fill="#3a3a3a"/><circle cx="1526.5" cy="339.4" r="0.450" fill="#3a3a3a"/><circle cx="1546.9" cy="332.9" r="0.450" fill="#3a3a3a"/><circle cx="1540.1" cy="336.5" r="0.450" fill="#3a3a3a"/><circle cx="1521.2" cy="337.8" r="0.450" fill="#3a3a3a"/><circle cx="1539.9" cy="328.6" r="0.450" fill="#3a3a3a"/><circle cx="1523.1" cy="345.1" r="0.450" fill="#3a3a3a"/><circle cx="1522.3" cy="347.6" r="0.450" fill="#3a3a3a"/><circle cx="1542.5" cy="332.9" r="0.450" fill="#3a3a3a"/><circle cx="1534.2" cy="349.2" r="0.450" fill="#3a3a3a"/><circle cx="1538.8" cy="325.5" r="0.450" fill="#3a3a3a"/><circle cx="1520.5" cy="339.5" r="0.450" fill="#3a3a3a"/><circle cx="1541.1" cy="350.4" r="0.450" fill="#3a3a3a"/><circle cx="1536.4" cy="337.7" r="0.450" fill="#3a3a3a"/><circle cx="1524.9" cy="345.2" r="0.450" fill="#3a3a3a"/><circle cx="1532.9" cy="353.1" r="0.450" fill="#3a3a3a"/><circle cx="1546.3" cy="344.4" r="0.450" fill="#3a3a3a"/><circle cx="1525.2" cy="338.1" r="0.450" fill="#3a3a3a"/><circle cx="1542.8" cy="341.4" r="0.450" fill="#3a3a3a"/><circle cx="1537.9" cy="333.3" r="0.450" fill="#3a3a3a"/><circle cx="1518.6" cy="343.4" r="0.450" fill="#3a3a3a"/><circle cx="1546.6" cy="335.9" r="0.450" fill="#3a3a3a"/><circle cx="1534.5" cy="325.2" r="0.450" fill="#3a3a3a"/><circle cx="1540.9" cy="352.1" r="0.450" fill="#3a3a3a"/><circle cx="1543.8" cy="331.0" r="0.450" fill="#3a3a3a"/><circle cx="1534.0" cy="340.3" r="0.450" fill="#3a3a3a"/><circle cx="1536.3" cy="333.4" r="0.450" fill="#3a3a3a"/><circle cx="1537.3" cy="340.5" r="0.450" fill="#3a3a3a"/><circle cx="1523.3" cy="330.8" r="0.450" fill="#3a3a3a"/><circle cx="1546.1" cy="341.0" r="0.450" fill="#3a3a3a"/><circle cx="1536.1" cy="353.2" r="0.450" fill="#3a3a3a"/><circle cx="1527.4" cy="349.4" r="0.450" fill="#3a3a3a"/><circle cx="1542.8" cy="332.8" r="0.450" fill="#3a3a3a"/><circle cx="1531.3" cy="342.1" r="0.450" fill="#3a3a3a"/><circle cx="1522.9" cy="328.1" r="0.450" fill="#3a3a3a"/><circle cx="1527.7" cy="350.0" r="0.450" fill="#3a3a3a"/><circle cx="1530.9" cy="351.7" r="0.450" fill="#3a3a3a"/><circle cx="1519.7" cy="336.5" r="0.450" fill="#3a3a3a"/><circle cx="1536.0" cy="349.0" r="0.450" fill="#3a3a3a"/><circle cx="1539.7" cy="348.3" r="0.450" fill="#3a3a3a"/><circle cx="1539.6" cy="340.6" r="0.450" fill="#3a3a3a"/><circle cx="1545.0" cy="345.3" r="0.450" fill="#3a3a3a"/><circle cx="1527.1" cy="347.0" r="0.450" fill="#3a3a3a"/><circle cx="1538.9" cy="340.9" r="0.450" fill="#3a3a3a"/><circle cx="1538.7" cy="336.5" r="0.450" fill="#3a3a3a"/><circle cx="1529.8" cy="326.3" r="0.450" fill="#3a3a3a"/><circle cx="1529.5" cy="350.7" r="0.450" fill="#3a3a3a"/><circle cx="1518.0" cy="336.8" r="0.450" fill="#3a3a3a"/><circle cx="1538.7" cy="345.1" r="0.450" fill="#3a3a3a"/><circle cx="1520.2" cy="338.7" r="0.450" fill="#3a3a3a"/><circle cx="1535.1" cy="348.8" r="0.450" fill="#3a3a3a"/><g filter="url(#sp12)" opacity="1"><ellipse cx="1567" cy="340" rx="14" ry="14" fill="url(#gc)"/></g><path d="M1589.5 326.2L1613.9 325.9" stroke="#2a2a2a" stroke-width="1.300"/><path d="M1589.0 330.5L1612.1 329.8" stroke="#2a2a2a" stroke-width="1.300"/><path d="M1589.0 334.1L1613.5 334.1" stroke="#2a2a2a" stroke-width="1.300"/><path d="M1589.1 338.5L1612.2 338.1" stroke="#2a2a2a" stroke-width="1.300"/><path d="M1589.3 342.7L1612.8 342.9" stroke="#2a2a2a" stroke-width="1.300"/><path d="M1588.5 346.2L1613.7 345.7" stroke="#2a2a2a" stroke-width="1.300"/><path d="M1590.0 350.2L1613.0 350.6" stroke="#2a2a2a" stroke-width="1.300"/><g filter="url(#sp13)" opacity="1"><ellipse cx="1635" cy="339" rx="13" ry="13" fill="url(#gf)"/></g><g filter="url(#sp14)" opacity="0.8"><ellipse cx="1669" cy="339" rx="16" ry="15" fill="url(#gc)"/></g><path d="M1632.5 364l2.500-4l2.500 4z" fill="#000"/><path d="M1664 360l6 4M1667 358l6 4" stroke="#555" stroke-width="1"/><path d="M1523 362q8-5 14-1" stroke="#888" stroke-width="1.200" fill="none"/><path d="M1565 363h4" stroke="#999" stroke-width="1"/><path d="M1600 363h2" stroke="#777" stroke-width="1"/></g><rect x="1648.5" y="146.5" width="3" height="5" fill="#7f9cff" opacity="0.8"/><path d="M1646.0 148.5h5M1648.5 146.0v5" stroke="#000" stroke-width="1.100"/><rect x="1682.5" y="146.5" width="3" height="5" fill="#7f9cff" opacity="0.8"/><path d="M1680.0 148.5h5M1682.5 146.0v5" stroke="#000" stroke-width="1.100"/><rect x="1546.5" y="180.5" width="3" height="5" fill="#7f9cff" opacity="0.8"/><path d="M1544.0 182.5h5M1546.5 180.0v5" stroke="#000" stroke-width="1.100"/><rect x="1580.5" y="180.5" width="3" height="5" fill="#7f9cff" opacity="0.8"/><path d="M1578.0 182.5h5M1580.5 180.0v5" stroke="#000" stroke-width="1.100"/><rect x="1614.5" y="180.5" width="3" height="5" fill="#7f9cff" opacity="0.8"/><path d="M1612.0 182.5h5M1614.5 180.0v5" stroke="#000" stroke-width="1.100"/><rect x="1648.5" y="180.5" width="3" height="5" fill="#7f9cff" opacity="0.8"/><path d="M1646.0 182.5h5M1648.5 180.0v5" stroke="#000" stroke-width="1.100"/><rect x="1682.5" y="180.5" width="3" height="5" fill="#7f9cff" opacity="0.8"/><path d="M1680.0 182.5h5M1682.5 180.0v5" stroke="#000" stroke-width="1.100"/><rect x="1546.5" y="214.5" width="3" height="5" fill="#7f9cff" opacity="0.8"/><path d="M1544.0 216.5h5M1546.5 214.0v5" stroke="#000" stroke-width="1.100"/><rect x="1580.5" y="214.5" width="3" height="5" fill="#ff8a8a" opacity="0.8"/><path d="M1578.0 216.5h5M1580.5 214.0v5" stroke="#000" stroke-width="1.100"/><rect x="1614.5" y="214.5" width="3" height="5" fill="#ff8a8a" opacity="0.8"/><path d="M1612.0 216.5h5M1614.5 214.0v5" stroke="#000" stroke-width="1.100"/><rect x="1648.5" y="214.5" width="3" height="5" fill="#ff8a8a" opacity="0.8"/><path d="M1646.0 216.5h5M1648.5 214.0v5" stroke="#000" stroke-width="1.100"/><rect x="1682.5" y="214.5" width="3" height="5" fill="#ff8a8a" opacity="0.8"/><path d="M1680.0 216.5h5M1682.5 214.0v5" stroke="#000" stroke-width="1.100"/><rect x="1546.5" y="248.5" width="3" height="5" fill="#ff8a8a" opacity="0.8"/><path d="M1544.0 250.5h5M1546.5 248.0v5" stroke="#000" stroke-width="1.100"/><path d="M1612.0 250.5h5M1614.5 248.0v5" stroke="#000" stroke-width="1.100"/><path d="M1646.0 250.5h5M1648.5 248.0v5" stroke="#000" stroke-width="1.100"/><path d="M1544.0 284.5h5M1546.5 282.0v5" stroke="#000" stroke-width="1.100"/><path d="M1578.0 284.5h5M1580.5 282.0v5" stroke="#000" stroke-width="1.100"/><rect x="1614.5" y="282.5" width="3" height="5" fill="#ff8a8a" opacity="0.8"/><path d="M1612.0 284.5h5M1614.5 282.0v5" stroke="#000" stroke-width="1.100"/><rect x="1648.5" y="282.5" width="3" height="5" fill="#ff8a8a" opacity="0.8"/><path d="M1646.0 284.5h5M1648.5 282.0v5" stroke="#000" stroke-width="1.100"/><rect x="1682.5" y="282.5" width="3" height="5" fill="#ff8a8a" opacity="0.8"/><path d="M1680.0 284.5h5M1682.5 282.0v5" stroke="#000" stroke-width="1.100"/><path d="M1544.0 318.5h5M1546.5 316.0v5" stroke="#000" stroke-width="1.100"/><path d="M1578.0 318.5h5M1580.5 316.0v5" stroke="#000" stroke-width="1.100"/><rect x="1614.5" y="316.5" width="3" height="5" fill="#ff8a8a" opacity="0.8"/><path d="M1612.0 318.5h5M1614.5 316.0v5" stroke="#000" stroke-width="1.100"/><rect x="1682.5" y="316.5" width="3" height="5" fill="#ff8a8a" opacity="0.8"/><path d="M1680.0 318.5h5M1682.5 316.0v5" stroke="#000" stroke-width="1.100"/><rect x="1546.5" y="350.5" width="3" height="5" fill="#ff8a8a" opacity="0.8"/><path d="M1544.0 352.5h5M1546.5 350.0v5" stroke="#000" stroke-width="1.100"/><rect x="1580.5" y="350.5" width="3" height="5" fill="#ff8a8a" opacity="0.8"/><path d="M1578.0 352.5h5M1580.5 350.0v5" stroke="#000" stroke-width="1.100"/><path d="M1612.0 352.5h5M1614.5 350.0v5" stroke="#000" stroke-width="1.100"/><path d="M1646.0 352.5h5M1648.5 350.0v5" stroke="#000" stroke-width="1.100"/><path d="M1680.0 352.5h5M1682.5 350.0v5" stroke="#000" stroke-width="1.100"/><path d="M1617 146v5h-5z" fill="#7f9cff"/><path d="M1583 248v5h-5z" fill="#ff7070"/></svg>
<div style="left:1697px;top:118px;width:15px;height:246px;background:#262626;"></div>
<div style="left:1697px;top:118px;width:15px;height:147px;background:#5e5e5e;border:1px solid #2c2c2c;border-radius:3px;"></div>
<div style="left:1517px;top:367px;width:193px;height:17px;background:#202020;"></div>
<span class="dv" style="left:1519px;top:369px;">Basic,</span>
<svg style="left:1696.5px;top:372.5px;width:10px;height:7px;" viewBox="0 0 10 7"><path d="M1 1.200l4 4l4-4" fill="none" stroke="#f0f0f0" stroke-width="1.900"/></svg>
<div style="left:1515px;top:386px;width:197px;height:17px;background:#383838;border:1px solid #7c7c7c;"></div>
<div style="left:1516px;top:387px;width:6px;height:15px;background:#5a5a5a;"></div>
<div style="left:1521px;top:387px;width:1px;height:15px;background:#111;"></div>
<span class="dv" style="left:1517px;top:388px;">Abstand</span>
<span class="dv" style="left:1650px;top:388px;width:48px;text-align:right;">10,0</span>
<svg style="left:1701px;top:388px;width:9px;height:13px;" viewBox="0 0 9 13"><path d="M1 5.200l3.500-3.500l3.500 3.500M1 7.800l3.500 3.500l3.500-3.500" fill="none" stroke="#d8d8d8" stroke-width="1.700"/></svg>
<div style="left:1513px;top:428px;width:201px;height:1px;background:#565656;"></div>
<svg style="left:1523px;top:408px;width:14px;height:14px;" viewBox="0 0 14 14"><path d="M0.500 3.500h6M0.500 7.500h4M0.500 11.500h9" stroke="#c4c4c4" stroke-width="1.600"/><path d="M12 0.500l1.500 1.500L7.500 9l-2.500 1l1-2.500z" fill="#c4c4c4"/></svg>
<svg style="left:1555px;top:407px;width:14px;height:15px;" viewBox="0 0 14 15"><path d="M3.500 3.500H9L12.500 7V14.500H3.500z" fill="none" stroke="#c4c4c4" stroke-width="1.300"/><path d="M0.500 3h5M3 0.500v5" stroke="#c4c4c4" stroke-width="1.300"/></svg>
<svg style="left:1589px;top:410px;width:12px;height:11px;" viewBox="0 0 12 11"><rect x="0.650" y="0.650" width="6.700" height="4.700" fill="none" stroke="#b4b4b4" stroke-width="1.300"/><path d="M8.800 4.500h1.600v4.700H4.600V6.800" fill="none" stroke="#b4b4b4" stroke-width="1.300"/></svg>
<div style="left:1620px;top:408px;width:14px;height:14px;background:#c8c8c8;border-radius:1.500px;background-image:repeating-conic-gradient(#c8c8c8 0 25%,#a8a8a8 0 50%);background-size:4px 4px;"></div>
<svg style="left:1620px;top:408px;width:14px;height:14px;" viewBox="0 0 14 14"><path d="M2.800 2.800l8.400 8.400M11.200 2.800l-8.400 8.400" stroke="#454545" stroke-width="2.200"/></svg>
<svg style="left:1652px;top:408px;width:13px;height:14px;" viewBox="0 0 13 14"><path d="M10.500 4A5 5 0 1 0 11.500 8.500" fill="none" stroke="#c4c4c4" stroke-width="1.800"/><path d="M12.500 0.500v5.500H7z" fill="#c4c4c4"/></svg>
<svg style="left:1686px;top:407px;width:15px;height:15px;" viewBox="0 0 15 15"><path d="M2.500 6.500V0.800H9L12.500 4V6.500" fill="none" stroke="#c4c4c4" stroke-width="1.300"/><path d="M0.500 8h14v6.500h-14z" fill="#c4c4c4"/><path d="M2 10h11M2 12h11" stroke="#454545" stroke-width="1" stroke-dasharray="1 1"/></svg>
<div style="left:1604px;top:429px;width:4.5px;height:2px;background:#8a8a8a;"></div>
<div style="left:1611px;top:429px;width:4.5px;height:2px;background:#8a8a8a;"></div>
<div style="left:1618px;top:429px;width:4.5px;height:2px;background:#8a8a8a;"></div>
<div style="left:1510px;top:461px;width:2px;height:4px;background:#9a9a9a;"></div>
<div style="left:1510px;top:467px;width:2px;height:4px;background:#9a9a9a;"></div>
<div style="left:1510px;top:473px;width:2px;height:4px;background:#9a9a9a;"></div>
<div style="left:1577px;top:434px;width:111px;height:21px;background:#2c2c2c;"></div>
<div style="left:1635px;top:434px;width:1px;height:21px;background:#3a3a3a;"></div>
<div style="left:1513px;top:432px;width:64px;height:24px;background:#454545;border:1px solid #575757;border-bottom:none;"></div>
<div style="left:1577px;top:455px;width:136px;height:1px;background:#575757;"></div>
<svg style="left:1515px;top:437px;width:13px;height:13px;" viewBox="0 0 13 13"><path d="M2.500 0.500h10l-2 3h-10zM2.500 4.800h10l-2 3h-10zM2.500 9.100h10l-2 3h-10z" fill="#d0d0d0"/></svg>
<span class="dv" style="left:1530px;top:437px;">Ebenen</span>
<svg style="left:1578px;top:437px;width:13px;height:13px;" viewBox="0 0 13 13"><rect x="0.500" y="0.500" width="12" height="12" fill="none" stroke="#c8c8c8"/><path d="M3.500 2.500v8M6.500 2.500v8M9.500 2.500v8" stroke="#8c8c8c" stroke-width="1.400"/></svg>
<span class="dv" style="left:1593px;top:438px;">Kanäle</span>
<svg style="left:1637px;top:439px;width:14px;height:11px;" viewBox="0 0 14 11"><path d="M1.500 10C2.300 6.500 4.800 5 7 5C9.200 5 11.700 6.500 12.500 10" fill="none" stroke="#d0d0d0" stroke-width="1.700"/><path d="M1 2.800h12" stroke="#d0d0d0" stroke-width="1"/><rect x="0" y="1.400" width="3" height="2.800" fill="#d0d0d0"/><rect x="11" y="1.400" width="3" height="2.800" fill="#d0d0d0"/><rect x="5.700" y="1.600" width="2.600" height="2.400" fill="#d0d0d0"/></svg>
<span class="dv" style="left:1652px;top:438px;">Pfade</span>
<svg style="left:1699px;top:439px;width:10px;height:10px;" viewBox="0 0 10 10"><rect x="0.500" y="0.500" width="9" height="9" fill="none" stroke="#b8b8b8"/><path d="M7.500 2v6L2.500 5z" fill="#c8c8c8"/></svg>
<div class="btn" style="left:1515px;top:458px;width:153px;height:27px;"></div>
<span class="dv" style="left:1522px;top:465px;">Modus</span>
<span class="dv" style="left:1602px;top:465px;">Normal</span>
<svg style="left:1649px;top:467px;width:12px;height:8px;" viewBox="0 0 12 8"><path d="M0.800 1.200l5.200 5.200l5.200-5.200" fill="none" stroke="#e8e8e8" stroke-width="1.600"/></svg>
<div class="btn" style="left:1670px;top:458px;width:42px;height:27px;"></div>
<svg style="left:1674px;top:465px;width:13px;height:14px;" viewBox="0 0 13 14"><path d="M4.200 4.300A4.600 4.600 0 1 1 6.800 12.800" fill="none" stroke="#c8c8c8" stroke-width="1.500"/><path d="M0.500 4.800L5 1.600V7.500z" fill="#c8c8c8"/><circle cx="3.300" cy="11.300" r="1.800" fill="#c8c8c8"/></svg>
<svg style="left:1693px;top:467px;width:12px;height:8px;" viewBox="0 0 12 8"><path d="M0.800 1.200l5.200 5.200l5.200-5.200" fill="none" stroke="#e8e8e8" stroke-width="1.600"/></svg>
<div style="left:1515px;top:486px;width:197px;height:17px;background:#585858;border:1px solid #858585;"></div>
<div style="left:1699px;top:487px;width:1px;height:15px;background:#0e0e0e;"></div>
<div style="left:1700px;top:487px;width:11px;height:15px;background:#303030;"></div>
<span class="dv" style="left:1517px;top:488px;">Deckkraft</span>
<span class="dv" style="left:1650px;top:488px;width:48px;text-align:right;">100,0</span>
<svg style="left:1701px;top:488px;width:9px;height:13px;" viewBox="0 0 9 13"><path d="M1 5.200l3.500-3.500l3.500 3.500" fill="none" stroke="#808080" stroke-width="1.700"/><path d="M1 7.800l3.500 3.500l3.500-3.500" fill="none" stroke="#d8d8d8" stroke-width="1.700"/></svg>
<span class="dv" style="left:1515px;top:509px;">Sperre:</span>
<svg style="left:1562px;top:509px;width:12px;height:13px;" viewBox="0 0 12 13"><path d="M11.800 0.200L6 9l-2.200-1.400z" fill="#c8c8c8"/><path d="M3.400 8l2.200 1.400c-.8 2.200-2.800 3.200-5.400 3.100c1.600-.9 2.100-2.200 3.200-4.500z" fill="#c8c8c8"/></svg>
<svg style="left:1585px;top:509px;width:13px;height:13px;" viewBox="0 0 13 13"><path d="M6.500 0l2.200 2.800H7.200V5.800H10.200V4.300L13 6.500l-2.800 2.200V7.200H7.200v3h1.500L6.500 13L4.300 10.200H5.800V7.200H2.800v1.500L0 6.500l2.800-2.200V5.800H5.800V2.800H4.300z" fill="#c8c8c8"/></svg>
<div style="left:1609px;top:509px;width:13px;height:13px;background-image:repeating-conic-gradient(#c0c0c0 0 25%,#7a7a7a 0 50%);background-size:6px 6px;border-radius:1px;"></div>
<div style="left:1515px;top:527px;width:197px;height:327px;background:#303030;"></div>
<div style="left:1516px;top:528px;width:195px;height:26px;background:#1f1f1f;"></div>
<svg style="left:1520px;top:534px;width:20px;height:14px;" viewBox="0 0 20 14"><path d="M0.800 7C4 1.500 16 1.500 19.200 7C16 12.500 4 12.500 0.800 7z" fill="none" stroke="#d4d4d4" stroke-width="1.500"/><circle cx="10" cy="6.800" r="3.400" fill="#e0e0e0"/><circle cx="8.800" cy="5.600" r="1.100" fill="#1f1f1f"/></svg>
<div style="left:1591px;top:530px;width:36px;height:22px;background:#ffffff;"></div>
<span class="dvb" style="left:1631.5px;top:534px;letter-spacing:-0.026px;">Hintergrund</span>
<svg style="left:1519px;top:858px;width:14px;height:15px;" viewBox="0 0 14 15"><path d="M3.500 3.500H9L12.500 7V14.500H3.500z" fill="none" stroke="#c4c4c4" stroke-width="1.300"/><path d="M0.500 3h5M3 0.500v5" stroke="#c4c4c4" stroke-width="1.300"/></svg>
<svg style="left:1544px;top:859px;width:14px;height:14px;" viewBox="0 0 14 14"><path d="M0.500 0.500h5l1.500 2h6.500v11h-13z" fill="#c4c4c4"/><path d="M4 8.500h6M7 5.500v6" stroke="#454545" stroke-width="1.500"/></svg>
<svg style="left:1568px;top:861px;width:13px;height:8px;" viewBox="0 0 13 8"><path d="M1 7l5.500-5.500L12 7" fill="none" stroke="#c4c4c4" stroke-width="1.700"/></svg>
<svg style="left:1592px;top:862px;width:13px;height:8px;" viewBox="0 0 13 8"><path d="M1 1l5.500 5.500L12 1" fill="none" stroke="#c4c4c4" stroke-width="1.700"/></svg>
<svg style="left:1617px;top:861px;width:12px;height:11px;" viewBox="0 0 12 11"><rect x="0.650" y="0.650" width="6.900" height="4.900" fill="none" stroke="#c4c4c4" stroke-width="1.300"/><path d="M9 4.500h1.800v4.800H4.600V7" fill="none" stroke="#c4c4c4" stroke-width="1.300"/></svg>
<svg style="left:1640px;top:859px;width:14px;height:13px;" viewBox="0 0 14 13"><path d="M2 1.500h7l-1.500 2h-7zM2 5.500h7l-1.500 2h-7zM2 9.500h7l-1.500 2h-7z" fill="#c4c4c4"/><path d="M11.500 1v10M9 8.500l2.500 3l2.500-3" fill="none" stroke="#c4c4c4" stroke-width="1.400"/></svg>
<svg style="left:1664px;top:858px;width:14px;height:14px;" viewBox="0 0 14 14"><path d="M3 0.500h8v4c0 2-1.500 3.500-4 3.500s-4-1.500-4-3.500z" fill="#c4c4c4"/><circle cx="5.300" cy="3" r="0.900" fill="#454545"/><circle cx="8.700" cy="3" r="0.900" fill="#454545"/><path d="M5 5.300q2 1.500 4 0" stroke="#454545" fill="none" stroke-width="0.900"/><path d="M3 9.500h11l-3 4h-11z" fill="#c4c4c4"/></svg>
<div style="left:1691px;top:859px;width:14px;height:14px;background:#c8c8c8;border-radius:1.500px;"></div>
<svg style="left:1691px;top:859px;width:14px;height:14px;" viewBox="0 0 14 14"><path d="M2.800 2.800l8.400 8.400M11.200 2.800l-8.400 8.400" stroke="#454545" stroke-width="2.200"/></svg>
<div style="left:218px;top:56px;width:301px;height:562px;background:#474747;box-shadow:2px 2px 4px rgba(0,0,0,0.55);border:1px solid #4f4f4f;border-top-color:#555;"></div>
<span class="ls" style="left:247px;top:64px;letter-spacing:-0.130px;">Duplizieren</span>
<span class="ls" style="left:472px;top:64px;letter-spacing:-0.114px;">Strg+D</span>
<svg style="left:226px;top:64.5px;width:13px;height:13px;" viewBox="0 0 14 14"><rect x="0.650" y="0.650" width="7.500" height="6" fill="none" stroke="#bdbdbd" stroke-width="1.300"/><path d="M9.500 4.500h2.800v6.200H4.800V8" fill="none" stroke="#bdbdbd" stroke-width="1.300"/></svg>
<div style="left:224px;top:88px;width:290px;height:1px;background:#1c1c1c;"></div>
<span class="ls" style="left:247px;top:103px;letter-spacing:0.097px;">Modus</span>
<svg style="left:502px;top:102px;width:10px;height:14px;" viewBox="0 0 10 14"><path d="M1.500 1l6.500 6l-6.500 6" fill="none" stroke="#e6e6e6" stroke-width="1.500"/></svg>
<span class="ls" style="left:247px;top:126px;letter-spacing:-0.140px;">Genauigkeit</span>
<svg style="left:502px;top:125px;width:10px;height:14px;" viewBox="0 0 10 14"><path d="M1.500 1l6.500 6l-6.500 6" fill="none" stroke="#e6e6e6" stroke-width="1.500"/></svg>
<span class="ls" style="left:247px;top:149px;letter-spacing:-0.172px;">Farbverwaltung</span>
<svg style="left:502px;top:148px;width:10px;height:14px;" viewBox="0 0 10 14"><path d="M1.500 1l6.500 6l-6.500 6" fill="none" stroke="#e6e6e6" stroke-width="1.500"/></svg>
<div style="left:224px;top:173px;width:290px;height:1px;background:#1c1c1c;"></div>
<span class="ls" style="left:247px;top:188px;letter-spacing:-0.139px;">Transformation</span>
<svg style="left:502px;top:187px;width:10px;height:14px;" viewBox="0 0 10 14"><path d="M1.500 1l6.500 6l-6.500 6" fill="none" stroke="#e6e6e6" stroke-width="1.500"/></svg>
<span class="ls" style="left:247px;top:211px;letter-spacing:-0.174px;">Leinwandgröße ...</span>
<svg style="left:226px;top:211.5px;width:13px;height:13px;" viewBox="0 0 14 14"><rect x="4" y="4" width="8.500" height="7.500" fill="#9a9a9a"/><rect x="5.500" y="5.500" width="5.500" height="4.500" fill="#d8d8d8"/><path d="M4 2.500h9.500V12" fill="none" stroke="#bdbdbd" stroke-width="1"/><path d="M1.500 4v8.500M0 10.500l1.500 2l1.500-2" fill="none" stroke="#bdbdbd" stroke-width="1"/><path d="M11 0l2.500 1.200L11 2.500" fill="#bdbdbd"/></svg>
<span class="ls" style="left:247px;top:234px;letter-spacing:-0.290px;">Leinwand an Ebenen anpassen</span>
<span class="ls" style="left:247px;top:257px;letter-spacing:-0.177px;">Leinwand an Auswahl anpassen</span>
<span class="ls" style="left:247px;top:280px;letter-spacing:-0.216px;">Druckgröße ...</span>
<svg style="left:226px;top:280.5px;width:13px;height:13px;" viewBox="0 0 14 14"><path d="M2.500 0.500h8v2.500h-8z" fill="#bdbdbd"/><path d="M0.500 3.500h12v5.500h-2v-2h-8v2h-2z" fill="#bdbdbd"/><path d="M3 7.500h7v4.500h-7z" fill="none" stroke="#bdbdbd" stroke-width="1.200"/><rect x="4.500" y="9" width="4" height="1.500" fill="#bdbdbd"/></svg>
<span class="ls" style="left:247px;top:303px;letter-spacing:-0.245px;">Bild skalieren ...</span>
<svg style="left:226px;top:303.5px;width:13px;height:13px;" viewBox="0 0 14 14"><rect x="3.500" y="3.500" width="9" height="8" fill="none" stroke="#bdbdbd" stroke-width="1.400"/><rect x="5.500" y="5.500" width="5" height="4" fill="#8a8a8a"/><path d="M0.500 0.500l3 3M0.500 0.500h2.500M0.500 0.500v2.500" stroke="#bdbdbd" stroke-width="1.100" fill="none"/></svg>
<div style="left:224px;top:327px;width:290px;height:1px;background:#1c1c1c;"></div>
<span class="ls" style="left:247px;top:342px;letter-spacing:-0.059px;">Auf Auswahl zuschneiden</span>
<svg style="left:226px;top:342.5px;width:13px;height:13px;" viewBox="0 0 14 14"><g transform="translate(0.5,0) scale(0.85)" fill="#bdbdbd"><path d="M1 3h12v12h-2V5H1z"/><path d="M2 6h2v6h7v2H2z"/><rect x="2" y="1" width="2" height="1"/><rect x="14" y="12" width="1" height="2"/></g></svg>
<span class="ls" style="left:247px;top:365px;letter-spacing:-0.046px;">Auf Inhalt zuschneiden</span>
<svg style="left:226px;top:365.5px;width:13px;height:13px;" viewBox="0 0 14 14"><g transform="translate(0.5,0) scale(0.85)" fill="#bdbdbd"><path d="M1 3h12v12h-2V5H1z"/><path d="M2 6h2v6h7v2H2z"/><rect x="2" y="1" width="2" height="1"/><rect x="14" y="12" width="1" height="2"/></g></svg>
<span class="ls" style="left:247px;top:388px;letter-spacing:-0.254px;">Fanatisch zuschneiden</span>
<svg style="left:226px;top:388.5px;width:13px;height:13px;" viewBox="0 0 14 14"><g fill="#bdbdbd"><path d="M8.300 0h2l.3 1.600l1.200.5l1.400-.9l1.400 1.400l-.9 1.400l.5 1.200l1.600.3v2l-1.600.3l-.5 1.200l.9 1.400l-1.400 1.400l-1.400-.9l-1.200.5l-.3 1.600h-2l-.3-1.600l-1.200-.5l-1.400.9l-1.400-1.400l.9-1.400l-.5-1.200l-1.600-.3v-2l1.600-.3l.5-1.200l-.9-1.400l1.400-1.400l1.400.9l1.200-.5z" transform="translate(2.500,-0.500) scale(0.720)"/></g><circle cx="9.200" cy="4.800" r="1.500" fill="#474747"/><g fill="#8f8f8f"><path d="M8.300 0h2l.3 1.600l1.200.5l1.400-.9l1.400 1.400l-.9 1.400l.5 1.200l1.600.3v2l-1.600.3l-.5 1.200l.9 1.400l-1.400 1.400l-1.400-.9l-1.200.5l-.3 1.600h-2l-.3-1.600l-1.200-.5l-1.400.9l-1.400-1.400l.9-1.400l-.5-1.200l-1.600-.3v-2l1.600-.3l.5-1.200l-.9-1.400l1.400-1.400l1.400.9l1.200-.5z" transform="translate(-1,6) scale(0.480)"/></g><circle cx="3.450" cy="9.500" r="1" fill="#474747"/></svg>
<span class="ls" style="left:247px;top:411px;letter-spacing:0.015px;">Mit Hilfslinien zerlegen</span>
<svg style="left:226px;top:411.5px;width:13px;height:13px;" viewBox="0 0 14 14"><g fill="#bdbdbd"><path d="M8.300 0h2l.3 1.600l1.200.5l1.400-.9l1.400 1.400l-.9 1.400l.5 1.200l1.600.3v2l-1.600.3l-.5 1.200l.9 1.400l-1.400 1.400l-1.400-.9l-1.200.5l-.3 1.600h-2l-.3-1.600l-1.200-.5l-1.400.9l-1.400-1.400l.9-1.400l-.5-1.200l-1.600-.3v-2l1.600-.3l.5-1.200l-.9-1.400l1.400-1.400l1.400.9l1.200-.5z" transform="translate(2.500,-0.500) scale(0.720)"/></g><circle cx="9.200" cy="4.800" r="1.500" fill="#474747"/><g fill="#8f8f8f"><path d="M8.300 0h2l.3 1.600l1.200.5l1.400-.9l1.400 1.400l-.9 1.400l.5 1.200l1.600.3v2l-1.600.3l-.5 1.200l.9 1.400l-1.400 1.400l-1.400-.9l-1.200.5l-.3 1.600h-2l-.3-1.600l-1.200-.5l-1.400.9l-1.400-1.400l.9-1.400l-.5-1.200l-1.600-.3v-2l1.600-.3l.5-1.200l-.9-1.400l1.400-1.400l1.400.9l1.200-.5z" transform="translate(-1,6) scale(0.480)"/></g><circle cx="3.450" cy="9.500" r="1" fill="#474747"/></svg>
<div style="left:224px;top:435px;width:290px;height:1px;background:#1c1c1c;"></div>
<span class="ls" style="left:247px;top:450px;letter-spacing:-0.276px;">Sichtbare Ebenen vereinen ...</span>
<span class="ls" style="left:469.2px;top:450px;letter-spacing:0.131px;">Strg+M</span>
<span class="ls" style="left:247px;top:473px;letter-spacing:-0.142px;">Bild zusammenfügen</span>
<span class="ls" style="left:247px;top:496px;letter-spacing:-0.243px;">Sichtbare Ebenen ausrichten ...</span>
<svg style="left:226px;top:496.5px;width:13px;height:13px;" viewBox="0 0 14 14"><g fill="#bdbdbd"><path d="M8.300 0h2l.3 1.600l1.200.5l1.400-.9l1.400 1.400l-.9 1.400l.5 1.200l1.600.3v2l-1.600.3l-.5 1.200l.9 1.400l-1.400 1.400l-1.400-.9l-1.200.5l-.3 1.600h-2l-.3-1.600l-1.200-.5l-1.400.9l-1.400-1.400l.9-1.400l-.5-1.200l-1.600-.3v-2l1.600-.3l.5-1.200l-.9-1.400l1.400-1.400l1.400.9l1.200-.5z" transform="translate(2.500,-0.500) scale(0.720)"/></g><circle cx="9.200" cy="4.800" r="1.500" fill="#474747"/><g fill="#8f8f8f"><path d="M8.300 0h2l.3 1.600l1.200.5l1.400-.9l1.400 1.400l-.9 1.400l.5 1.200l1.600.3v2l-1.600.3l-.5 1.200l.9 1.400l-1.400 1.400l-1.400-.9l-1.200.5l-.3 1.600h-2l-.3-1.600l-1.200-.5l-1.400.9l-1.400-1.400l.9-1.400l-.5-1.200l-1.600-.3v-2l1.600-.3l.5-1.200l-.9-1.400l1.400-1.400l1.400.9l1.200-.5z" transform="translate(-1,6) scale(0.480)"/></g><circle cx="3.450" cy="9.500" r="1" fill="#474747"/></svg>
<div style="left:224px;top:520px;width:290px;height:1px;background:#1c1c1c;"></div>
<span class="ls" style="left:247px;top:535px;letter-spacing:-0.166px;">Raster konfigurieren ...</span>
<svg style="left:226px;top:535.5px;width:13px;height:13px;" viewBox="0 0 14 14"><path d="M0.500 0.500h12v12h-12zM4.500 0.500v12M8.500 0.500v12M0.500 4.500h12M0.500 8.500h12" fill="none" stroke="#bdbdbd" stroke-width="1" shape-rendering="crispEdges"/></svg>
<div style="left:224px;top:559px;width:290px;height:1px;background:#1c1c1c;"></div>
<span class="ls" style="left:247px;top:574px;letter-spacing:-0.072px;">Bildeigenschaften</span>
<span class="ls" style="left:444.3px;top:574px;letter-spacing:-0.032px;">Alt+Eingabe</span>
<svg style="left:226px;top:574.5px;width:13px;height:13px;" viewBox="0 0 14 14"><circle cx="6.500" cy="6.500" r="5.700" fill="none" stroke="#bdbdbd" stroke-width="1.300"/><path d="M6.500 5.500v4.200M5.300 5.700h1.200M5.300 9.700h2.400" stroke="#bdbdbd" stroke-width="1.200" fill="none"/><circle cx="6.400" cy="3.600" r="0.800" fill="#bdbdbd"/></svg>
<span class="ls" style="left:247px;top:597px;letter-spacing:-0.067px;">Metadaten</span>
<svg style="left:502px;top:596px;width:10px;height:14px;" viewBox="0 0 10 14"><path d="M1.500 1l6.500 6l-6.500 6" fill="none" stroke="#e6e6e6" stroke-width="1.500"/></svg>
</body></html>
